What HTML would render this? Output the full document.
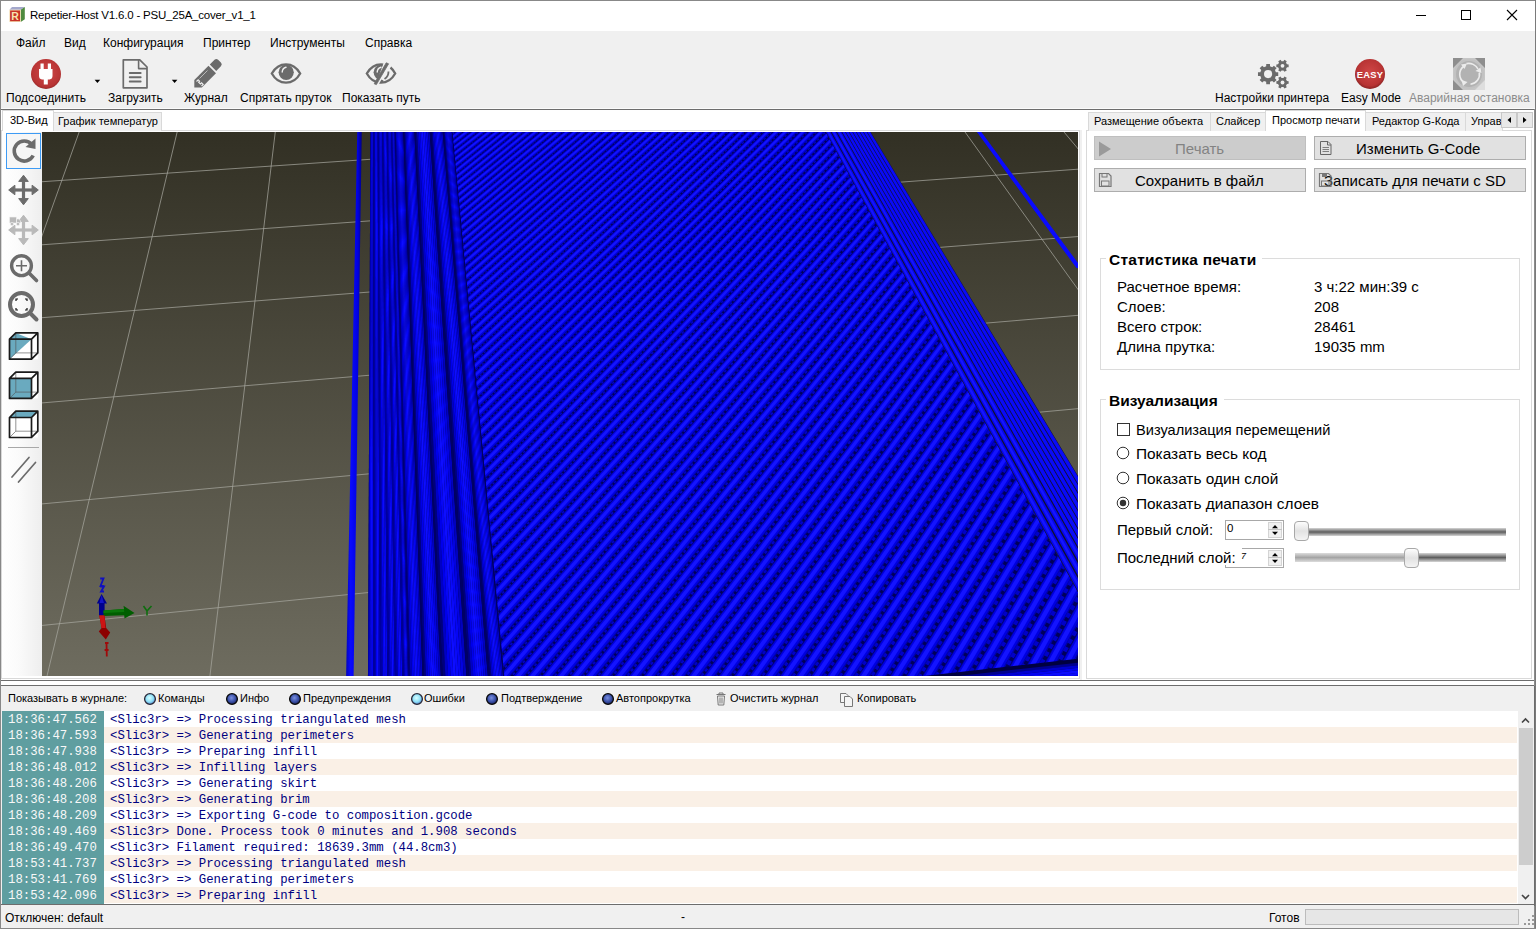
<!DOCTYPE html><html><head><meta charset="utf-8"><style>
html,body{margin:0;padding:0;}
body{width:1536px;height:929px;overflow:hidden;position:relative;background:#f0f0f0;font-family:"Liberation Sans", sans-serif;}
.t{position:absolute;white-space:pre;}
svg{position:absolute;left:0;top:0;}
</style></head><body>
<div style="position:absolute;left:0px;top:0px;width:1536px;height:31px;background:#fff"></div>
<div class="t" style="left:30px;top:10.27px;font-size:11.5px;line-height:11.5px;color:#000;font-weight:normal;font-family:'Liberation Sans', sans-serif;letter-spacing:-0.2px">Repetier-Host V1.6.0 - PSU_25A_cover_v1_1</div>
<svg style="left:0;top:0" width="30" height="30" viewBox="0 0 30 30">
<path d="M9.4 9.8 L12 7.1 H24.8 L20.7 9.8 Z" fill="#a4a8cc"/>
<path d="M20.7 9.8 L24.8 7.1 V19.2 L20.7 21.9 Z" fill="#4e8a3e"/>
<rect x="9.4" y="9.8" width="11.3" height="12.1" fill="#f2d8a8"/>
<rect x="10.1" y="10.5" width="9.9" height="10.7" fill="#c83228"/>
<text x="11.3" y="19.9" font-family="Liberation Sans" font-weight="bold" font-size="10.5" fill="#f8e4b0">R</text>
</svg>
<div style="position:absolute;left:1416px;top:15px;width:10px;height:1px;background:#000"></div>
<div style="position:absolute;left:1461px;top:10px;width:10px;height:10px;border:1px solid #000;box-sizing:border-box"></div>
<svg style="left:1506px;top:9px" width="12" height="12"><path d="M1 1 L11 11 M11 1 L1 11" stroke="#000" stroke-width="1.1"/></svg>
<div class="t" style="left:16px;top:36.84px;font-size:12px;line-height:12px;color:#000;font-weight:normal;font-family:'Liberation Sans', sans-serif;">Файл</div>
<div class="t" style="left:64px;top:36.84px;font-size:12px;line-height:12px;color:#000;font-weight:normal;font-family:'Liberation Sans', sans-serif;">Вид</div>
<div class="t" style="left:103px;top:36.84px;font-size:12px;line-height:12px;color:#000;font-weight:normal;font-family:'Liberation Sans', sans-serif;">Конфигурация</div>
<div class="t" style="left:203px;top:36.84px;font-size:12px;line-height:12px;color:#000;font-weight:normal;font-family:'Liberation Sans', sans-serif;">Принтер</div>
<div class="t" style="left:270px;top:36.84px;font-size:12px;line-height:12px;color:#000;font-weight:normal;font-family:'Liberation Sans', sans-serif;">Инструменты</div>
<div class="t" style="left:365px;top:36.84px;font-size:12px;line-height:12px;color:#000;font-weight:normal;font-family:'Liberation Sans', sans-serif;">Справка</div>
<div class="t" style="left:6px;top:91.84px;font-size:12px;line-height:12px;color:#000;font-weight:normal;font-family:'Liberation Sans', sans-serif;">Подсоединить</div>
<div class="t" style="left:108px;top:91.84px;font-size:12px;line-height:12px;color:#000;font-weight:normal;font-family:'Liberation Sans', sans-serif;">Загрузить</div>
<div class="t" style="left:184px;top:91.84px;font-size:12px;line-height:12px;color:#000;font-weight:normal;font-family:'Liberation Sans', sans-serif;">Журнал</div>
<div class="t" style="left:240px;top:91.84px;font-size:12px;line-height:12px;color:#000;font-weight:normal;font-family:'Liberation Sans', sans-serif;">Спрятать пруток</div>
<div class="t" style="left:342px;top:91.84px;font-size:12px;line-height:12px;color:#000;font-weight:normal;font-family:'Liberation Sans', sans-serif;">Показать путь</div>
<div class="t" style="left:1215px;top:91.84px;font-size:12px;line-height:12px;color:#000;font-weight:normal;font-family:'Liberation Sans', sans-serif;">Настройки принтера</div>
<div class="t" style="left:1341px;top:91.84px;font-size:12px;line-height:12px;color:#000;font-weight:normal;font-family:'Liberation Sans', sans-serif;">Easy Mode</div>
<div class="t" style="left:1409px;top:91.84px;font-size:12px;line-height:12px;color:#8c8c8c;font-weight:normal;font-family:'Liberation Sans', sans-serif;">Аварийная остановка</div>
<div style="position:absolute;left:0px;top:108px;width:1536px;height:1px;background:#fbfbfb"></div>
<div style="position:absolute;left:0px;top:109px;width:1536px;height:1px;background:#6d6d6d"></div>
<svg style="left:0;top:52px" width="440" height="44" viewBox="0 52 440 44">
<defs><radialGradient id="rg1" cx="0.5" cy="0.45" r="0.55"><stop offset="0" stop-color="#d04848"/><stop offset="0.85" stop-color="#b83434"/><stop offset="1" stop-color="#9a2a2a"/></radialGradient></defs>
<circle cx="46" cy="74" r="15" fill="url(#rg1)"/>
<rect x="40.5" y="63.5" width="3.2" height="6" fill="#fff"/><rect x="47.8" y="63.5" width="3.2" height="6" fill="#fff"/>
<path d="M39 69 H52.5 V76 Q52.5 79 49.5 79.5 H47.8 V84.5 H43.8 V79.5 H42 Q39 79 39 76 Z" fill="#fff"/>
<path d="M94.6 79.8 H100.2 L97.4 83 Z" fill="#000"/>
<path d="M171.8 79.8 H177.4 L174.6 83 Z" fill="#000"/>
<path d="M123.3 59.8 H139.8 L147 67 V87.8 H123.3 Z" fill="none" stroke="#6b6b6b" stroke-width="1.7" stroke-linejoin="round"/>
<path d="M138.6 60 V68.6 H147" fill="none" stroke="#6b6b6b" stroke-width="1.6" stroke-linejoin="round"/>
<rect x="128.8" y="72" width="12.8" height="1.9" rx="0.9" fill="#6b6b6b"/><rect x="128.8" y="76.3" width="12.8" height="1.9" rx="0.9" fill="#6b6b6b"/><rect x="128.8" y="80.5" width="12.8" height="1.9" rx="0.9" fill="#6b6b6b"/>
<path d="M194.3 87.5 L194.3 80 L208.5 65.8 L216 73.3 L201.8 87.5 Z" fill="#6b6b6b"/>
<path d="M209.8 64.5 L214.5 59.8 Q216.3 58 218.1 59.8 L220.9 62.6 Q222.7 64.4 220.9 66.2 L216.2 70.9 Z" fill="#6b6b6b"/>
<path d="M199.5 78.5 L207.5 70.5" stroke="#dcdcdc" stroke-width="0.7"/>
<path d="M196.5 81.5 L198.2 79.8 L199.6 81.2 L198.6 82.2 L200.4 84 L201.6 82.8 L203.2 84.4 L201.5 86" fill="none" stroke="#f0f0f0" stroke-width="1.1"/>
<path d="M271.8 73.5 C275 67.8 280 64.3 286 64.3 C292 64.3 297 67.8 300.2 73.5 C297 79.2 292 82.7 286 82.7 C280 82.7 275 79.2 271.8 73.5 Z" fill="none" stroke="#6b6b6b" stroke-width="2.3"/>
<circle cx="286.2" cy="72.3" r="7.6" fill="#6b6b6b"/>
<path d="M282.2 72 Q282.5 68.2 286 67.3" stroke="#f0f0f0" stroke-width="1.4" fill="none" stroke-linecap="round"/>
<defs><clipPath id="eyeL"><path d="M360 56 H386 L374 90 H360 Z"/></clipPath></defs>
<g clip-path="url(#eyeL)">
<path d="M366.8 73.5 C370 67.8 375 64.3 381 64.3 C387 64.3 392 67.8 395.2 73.5 C392 79.2 387 82.7 381 82.7 C375 82.7 370 79.2 366.8 73.5 Z" fill="none" stroke="#6b6b6b" stroke-width="2.3"/>
<circle cx="381.2" cy="72.3" r="7.6" fill="#6b6b6b"/>
<path d="M377.2 72 Q377.5 68.2 381 67.3" stroke="#f0f0f0" stroke-width="1.4" fill="none" stroke-linecap="round"/>
</g>
<path d="M386.2 62.8 L388.6 63.8 L376.4 84.6 L374.2 83.8 Z" fill="#6b6b6b" stroke="#6b6b6b" stroke-width="0.8" stroke-linejoin="round"/>
<path d="M390.5 67.5 C392.5 69.2 394 71.2 395.2 73.5 C392 79.2 387 82.7 381 82.7 L382.5 80" fill="none" stroke="#6b6b6b" stroke-width="2.3"/>
<path d="M388.5 71.5 C388.5 75 387 77.5 384.5 79" fill="none" stroke="#6b6b6b" stroke-width="1.8"/>
</svg>
<svg style="left:1240px;top:52px" width="296" height="44" viewBox="1240 52 296 44">
<polygon points="1275.86,72.17 1278.23,72.25 1278.23,75.95 1275.86,76.03 1274.95,78.23 1276.57,79.96 1273.96,82.57 1272.23,80.95 1270.03,81.86 1269.95,84.23 1266.25,84.23 1266.17,81.86 1263.97,80.95 1262.24,82.57 1259.63,79.96 1261.25,78.23 1260.34,76.03 1257.97,75.95 1257.97,72.25 1260.34,72.17 1261.25,69.97 1259.63,68.24 1262.24,65.63 1263.97,67.25 1266.17,66.34 1266.25,63.97 1269.95,63.97 1270.03,66.34 1272.23,67.25 1273.96,65.63 1276.57,68.24 1274.95,69.97" fill="#6b6b6b"/><circle cx="1268.1" cy="74.1" r="4.1" fill="#f0f0f0"/>
<polygon points="1286.97,64.35 1288.65,64.43 1288.65,67.17 1286.97,67.25 1285.99,68.94 1286.76,70.44 1284.38,71.81 1283.48,70.40 1281.52,70.40 1280.62,71.81 1278.24,70.44 1279.01,68.94 1278.03,67.25 1276.35,67.17 1276.35,64.43 1278.03,64.35 1279.01,62.66 1278.24,61.16 1280.62,59.79 1281.52,61.20 1283.48,61.20 1284.38,59.79 1286.76,61.16 1285.99,62.66" fill="#6b6b6b"/><circle cx="1282.5" cy="65.8" r="1.9" fill="#f0f0f0"/>
<polygon points="1286.97,81.05 1288.65,81.13 1288.65,83.87 1286.97,83.95 1285.99,85.64 1286.76,87.14 1284.38,88.51 1283.48,87.10 1281.52,87.10 1280.62,88.51 1278.24,87.14 1279.01,85.64 1278.03,83.95 1276.35,83.87 1276.35,81.13 1278.03,81.05 1279.01,79.36 1278.24,77.86 1280.62,76.49 1281.52,77.90 1283.48,77.90 1284.38,76.49 1286.76,77.86 1285.99,79.36" fill="#6b6b6b"/><circle cx="1282.5" cy="82.5" r="1.9" fill="#f0f0f0"/>
<defs><radialGradient id="rg2" cx="0.5" cy="0.45" r="0.55"><stop offset="0" stop-color="#d04646"/><stop offset="0.8" stop-color="#b83434"/><stop offset="1" stop-color="#8a2424"/></radialGradient></defs>
<circle cx="1370" cy="74" r="15" fill="url(#rg2)"/>
<text x="1370" y="77.8" text-anchor="middle" font-family="Liberation Sans" font-weight="bold" font-size="9.4" letter-spacing="0.2" fill="#fff">EASY</text>
<rect x="1453" y="58" width="32" height="32" fill="#c6c6c6"/>
<path d="M1453 58 H1463 L1453 68 Z M1475 58 H1485 V68 Z M1453 80 V90 H1463 Z" fill="#8e8e8e"/>
<path d="M1485 80 V90 H1475 Z" fill="#dedede"/>
<circle cx="1469" cy="74" r="15" fill="#c2c2c2"/>
<circle cx="1469" cy="74" r="13" fill="#b2b2b2"/>
<path d="M1463.5 66.5 A10 10 0 0 0 1464 82.5" stroke="#ececec" stroke-width="1.6" fill="none"/>
<path d="M1466.5 63.6 A10.5 10.5 0 0 1 1478 69" stroke="#ececec" stroke-width="1.6" fill="none"/>
<path d="M1479.3 72.5 A10 10 0 0 1 1470.5 84.3" stroke="#ececec" stroke-width="1.6" fill="none"/>
<path d="M1461 64.5 L1467 63.5 L1464.5 69 Z" fill="#ececec"/>
<path d="M1475.5 71 L1480.5 67.5 L1481.5 73 Z" fill="#ececec"/>
<path d="M1461.5 80 L1467.5 82 L1463 86 Z" fill="#ececec"/>
</svg>
<div style="position:absolute;left:1px;top:110px;width:1535px;height:570px;background:#ffffff"></div>
<div style="position:absolute;left:1080px;top:130px;width:2px;height:550px;background:#f0f0f0"></div>
<div style="position:absolute;left:1px;top:130px;width:1079px;height:549px;background:#fff;border:1px solid #d9d9d9;box-sizing:border-box"></div>
<div style="position:absolute;left:53px;top:112px;width:109px;height:19px;background:#f0f0f0;border:1px solid #d9d9d9;border-bottom:none;box-sizing:border-box"></div>
<div class="t" style="left:58px;top:116.19px;font-size:11px;line-height:11px;color:#000;font-weight:normal;font-family:'Liberation Sans', sans-serif;">График температур</div>
<div style="position:absolute;left:2px;top:110px;width:52px;height:21px;background:#fff;border:1px solid #d9d9d9;border-bottom:none;box-sizing:border-box"></div>
<div class="t" style="left:10px;top:114.69px;font-size:11px;line-height:11px;color:#000;font-weight:normal;font-family:'Liberation Sans', sans-serif;">3D-Вид</div>
<div style="position:absolute;left:2px;top:132px;width:40px;height:544px;background:linear-gradient(to right,#ffffff 0%,#fbfbfb 40%,#eeeeee 100%)"></div>
<svg style="left:42px;top:132px" width="1036" height="544" viewBox="42 132 1036 544"><defs>
<linearGradient id="bg3d" x1="0" y1="0" x2="0" y2="1"><stop offset="0" stop-color="#323024"/><stop offset="1" stop-color="#6e6c5f"/></linearGradient>
<linearGradient id="cyl" x1="0" y1="0" x2="1" y2="0"><stop offset="0" stop-color="#000048"/><stop offset="0.18" stop-color="#0000b8"/><stop offset="0.45" stop-color="#0a0aff"/><stop offset="0.7" stop-color="#0000d8"/><stop offset="1" stop-color="#00003a"/></linearGradient>
<linearGradient id="cylh" x1="0" y1="0" x2="0" y2="1"><stop offset="0" stop-color="#000070"/><stop offset="0.4" stop-color="#0a0aff"/><stop offset="1" stop-color="#000050"/></linearGradient>
<linearGradient id="cyl2" x1="0" y1="0" x2="1" y2="0"><stop offset="0" stop-color="#0000a0"/><stop offset="0.35" stop-color="#0a0aff"/><stop offset="0.75" stop-color="#0000e0"/><stop offset="1" stop-color="#000070"/></linearGradient>
</defs><rect x="42" y="132" width="1036" height="544" fill="url(#bg3d)"/><line x1="-62.28" y1="41.04" x2="-1058.60" y2="1712.94" stroke="#a8a8a0" stroke-width="1" stroke-opacity="0.72"/><line x1="27.15" y1="35.89" x2="-748.37" y2="1661.16" stroke="#a8a8a0" stroke-width="1" stroke-opacity="0.72"/><line x1="115.43" y1="30.80" x2="-450.89" y2="1611.50" stroke="#a8a8a0" stroke-width="1" stroke-opacity="0.72"/><line x1="202.58" y1="25.77" x2="-165.41" y2="1563.85" stroke="#a8a8a0" stroke-width="1" stroke-opacity="0.72"/><line x1="288.62" y1="20.81" x2="108.80" y2="1518.09" stroke="#a8a8a0" stroke-width="1" stroke-opacity="0.72"/><line x1="373.57" y1="15.92" x2="372.38" y2="1474.09" stroke="#a8a8a0" stroke-width="1" stroke-opacity="0.72"/><line x1="457.45" y1="11.08" x2="625.95" y2="1431.77" stroke="#a8a8a0" stroke-width="1" stroke-opacity="0.72"/><line x1="540.29" y1="6.31" x2="870.06" y2="1391.02" stroke="#a8a8a0" stroke-width="1" stroke-opacity="0.72"/><line x1="622.09" y1="1.59" x2="1105.23" y2="1351.77" stroke="#a8a8a0" stroke-width="1" stroke-opacity="0.72"/><line x1="702.89" y1="-3.07" x2="1331.95" y2="1313.93" stroke="#a8a8a0" stroke-width="1" stroke-opacity="0.72"/><line x1="782.69" y1="-7.67" x2="1550.66" y2="1277.42" stroke="#a8a8a0" stroke-width="1" stroke-opacity="0.72"/><line x1="861.52" y1="-12.21" x2="1761.78" y2="1242.18" stroke="#a8a8a0" stroke-width="1" stroke-opacity="0.72"/><line x1="939.40" y1="-16.70" x2="1965.69" y2="1208.15" stroke="#a8a8a0" stroke-width="1" stroke-opacity="0.72"/><line x1="1016.34" y1="-21.14" x2="2162.77" y2="1175.25" stroke="#a8a8a0" stroke-width="1" stroke-opacity="0.72"/><line x1="1092.36" y1="-25.52" x2="2353.35" y2="1143.44" stroke="#a8a8a0" stroke-width="1" stroke-opacity="0.72"/><line x1="1167.47" y1="-29.85" x2="2537.74" y2="1112.67" stroke="#a8a8a0" stroke-width="1" stroke-opacity="0.72"/><line x1="-283.30" y1="97.90" x2="1289.73" y2="2.26" stroke="#a8a8a0" stroke-width="1" stroke-opacity="0.72"/><line x1="-327.04" y1="150.40" x2="1343.40" y2="42.92" stroke="#a8a8a0" stroke-width="1" stroke-opacity="0.72"/><line x1="-377.01" y1="210.39" x2="1403.75" y2="88.63" stroke="#a8a8a0" stroke-width="1" stroke-opacity="0.72"/><line x1="-434.66" y1="279.59" x2="1472.12" y2="140.42" stroke="#a8a8a0" stroke-width="1" stroke-opacity="0.72"/><line x1="-501.88" y1="360.29" x2="1550.21" y2="199.58" stroke="#a8a8a0" stroke-width="1" stroke-opacity="0.72"/><line x1="-581.30" y1="455.62" x2="1640.26" y2="267.79" stroke="#a8a8a0" stroke-width="1" stroke-opacity="0.72"/><line x1="-676.55" y1="569.96" x2="1745.24" y2="347.32" stroke="#a8a8a0" stroke-width="1" stroke-opacity="0.72"/><line x1="-792.89" y1="709.62" x2="1869.21" y2="441.23" stroke="#a8a8a0" stroke-width="1" stroke-opacity="0.72"/><line x1="-938.21" y1="884.06" x2="2017.82" y2="553.80" stroke="#a8a8a0" stroke-width="1" stroke-opacity="0.72"/><line x1="-1124.86" y1="1108.12" x2="2199.24" y2="691.23" stroke="#a8a8a0" stroke-width="1" stroke-opacity="0.72"/><line x1="-1373.41" y1="1406.49" x2="2425.67" y2="862.76" stroke="#a8a8a0" stroke-width="1" stroke-opacity="0.72"/><polygon points="358.29,81.87 362.54,81.61 352.15,773.10 344.10,774.02" fill="url(#cyl2)"/><polygon points="370.66,81.10 447.30,76.31 511.97,754.84 367.54,771.34" fill="#00002e"/><polygon points="370.66,81.10 371.41,81.05 368.96,771.18 367.54,771.34" fill="rgb(0,0,178)"/><polygon points="371.36,81.05 372.11,81.01 370.28,771.03 368.87,771.19" fill="rgb(3,3,240)"/><polygon points="372.06,81.01 372.81,80.96 371.61,770.88 370.20,771.04" fill="rgb(12,12,252)"/><polygon points="372.76,80.97 373.51,80.92 372.94,770.72 371.52,770.88" fill="rgb(4,4,240)"/><polygon points="373.46,80.92 374.21,80.88 374.26,770.57 372.85,770.73" fill="rgb(0,0,157)"/><polygon points="374.16,80.88 375.00,80.83 375.76,770.40 374.17,770.58" fill="rgb(0,0,178)"/><polygon points="374.95,80.83 375.79,80.78 377.26,770.23 375.68,770.41" fill="rgb(3,3,240)"/><polygon points="375.75,80.78 376.59,80.73 378.76,770.06 377.18,770.24" fill="rgb(12,12,252)"/><polygon points="376.54,80.73 377.38,80.68 380.26,769.89 378.67,770.07" fill="rgb(4,4,240)"/><polygon points="377.33,80.68 378.17,80.63 381.76,769.72 380.17,769.90" fill="rgb(0,0,157)"/><polygon points="378.12,80.63 379.04,80.57 383.40,769.53 381.67,769.73" fill="rgb(0,0,178)"/><polygon points="378.99,80.58 379.90,80.52 385.04,769.34 383.31,769.54" fill="rgb(3,3,240)"/><polygon points="379.86,80.52 380.77,80.47 386.67,769.15 384.95,769.35" fill="rgb(12,12,252)"/><polygon points="380.72,80.47 381.63,80.41 388.31,768.97 386.59,769.16" fill="rgb(4,4,240)"/><polygon points="381.59,80.41 382.50,80.36 389.95,768.78 388.22,768.98" fill="rgb(0,0,157)"/><polygon points="382.45,80.36 383.33,80.31 391.51,768.60 389.86,768.79" fill="rgb(0,0,178)"/><polygon points="383.28,80.31 384.15,80.25 393.08,768.42 391.43,768.61" fill="rgb(3,3,240)"/><polygon points="384.11,80.26 384.98,80.20 394.64,768.24 392.99,768.43" fill="rgb(12,12,252)"/><polygon points="384.94,80.20 385.81,80.15 396.21,768.07 394.56,768.25" fill="rgb(4,4,240)"/><polygon points="385.76,80.15 386.64,80.10 397.78,767.89 396.12,768.08" fill="rgb(0,0,157)"/><polygon points="386.59,80.10 387.48,80.05 399.37,767.70 397.69,767.90" fill="rgb(0,0,178)"/><polygon points="387.44,80.05 388.33,79.99 400.97,767.52 399.29,767.71" fill="rgb(3,3,240)"/><polygon points="388.28,80.00 389.18,79.94 402.57,767.34 400.89,767.53" fill="rgb(12,12,252)"/><polygon points="389.13,79.94 390.02,79.89 404.17,767.16 402.49,767.35" fill="rgb(4,4,240)"/><polygon points="389.98,79.89 390.87,79.83 405.77,766.97 404.08,767.17" fill="rgb(0,0,157)"/><polygon points="390.82,79.84 391.44,79.80 406.84,766.85 405.68,766.98" fill="rgb(0,0,178)"/><polygon points="391.39,79.80 392.01,79.76 407.92,766.73 406.76,766.86" fill="rgb(3,3,240)"/><polygon points="391.96,79.77 392.58,79.73 409.00,766.61 407.83,766.74" fill="rgb(12,12,252)"/><polygon points="392.53,79.73 393.15,79.69 410.07,766.48 408.91,766.61" fill="rgb(4,4,240)"/><polygon points="393.10,79.69 393.72,79.66 411.15,766.36 409.99,766.49" fill="rgb(0,0,157)"/><polygon points="393.67,79.66 394.57,79.60 412.76,766.18 411.06,766.37" fill="rgb(0,0,125)"/><polygon points="394.53,79.61 395.43,79.55 414.38,765.99 412.68,766.18" fill="rgb(0,0,197)"/><polygon points="395.38,79.55 396.28,79.50 415.99,765.81 414.29,766.00" fill="rgb(0,0,235)"/><polygon points="396.24,79.50 397.14,79.44 417.60,765.62 415.90,765.82" fill="rgb(7,7,245)"/><polygon points="397.09,79.45 397.99,79.39 419.21,765.44 417.51,765.63" fill="rgb(14,14,255)"/><polygon points="397.94,79.39 398.84,79.34 420.82,765.25 419.13,765.45" fill="rgb(10,10,249)"/><polygon points="398.80,79.34 399.70,79.28 422.44,765.07 420.74,765.26" fill="rgb(6,6,243)"/><polygon points="399.65,79.28 400.55,79.23 424.05,764.89 422.35,765.08" fill="rgb(3,3,223)"/><polygon points="400.51,79.23 401.40,79.18 425.66,764.70 423.96,764.90" fill="rgb(1,1,190)"/><polygon points="401.36,79.18 402.26,79.12 427.27,764.52 425.57,764.71" fill="rgb(0,0,101)"/><polygon points="402.21,79.12 403.31,79.06 429.26,764.29 427.18,764.53" fill="rgb(0,0,125)"/><polygon points="403.27,79.06 404.37,78.99 431.25,764.06 429.17,764.30" fill="rgb(0,0,197)"/><polygon points="404.32,78.99 405.42,78.92 433.24,763.84 431.16,764.07" fill="rgb(0,0,235)"/><polygon points="405.38,78.93 406.48,78.86 435.22,763.61 433.15,763.85" fill="rgb(7,7,245)"/><polygon points="406.43,78.86 407.53,78.79 437.21,763.38 435.14,763.62" fill="rgb(14,14,255)"/><polygon points="407.49,78.80 408.59,78.73 439.20,763.16 437.13,763.39" fill="rgb(10,10,249)"/><polygon points="408.54,78.73 409.64,78.66 441.19,762.93 439.11,763.17" fill="rgb(6,6,243)"/><polygon points="409.60,78.66 410.70,78.59 443.17,762.70 441.10,762.94" fill="rgb(3,3,223)"/><polygon points="410.65,78.60 411.75,78.53 445.16,762.48 443.09,762.71" fill="rgb(1,1,190)"/><polygon points="411.70,78.53 412.80,78.46 447.14,762.25 445.07,762.49" fill="rgb(0,0,101)"/><polygon points="412.76,78.47 414.28,78.37 449.92,761.93 447.06,762.26" fill="rgb(0,0,125)"/><polygon points="414.23,78.37 415.75,78.28 452.70,761.61 449.83,761.94" fill="rgb(0,0,197)"/><polygon points="415.71,78.28 417.23,78.19 455.47,761.30 452.61,761.62" fill="rgb(0,0,235)"/><polygon points="417.18,78.19 418.70,78.09 458.25,760.98 455.39,761.31" fill="rgb(7,7,245)"/><polygon points="418.66,78.10 420.18,78.00 461.02,760.66 458.16,760.99" fill="rgb(14,14,255)"/><polygon points="420.13,78.00 421.65,77.91 463.79,760.35 460.93,760.67" fill="rgb(10,10,249)"/><polygon points="421.60,77.91 423.12,77.82 466.56,760.03 463.71,760.36" fill="rgb(6,6,243)"/><polygon points="423.08,77.82 424.60,77.73 469.33,759.71 466.48,760.04" fill="rgb(3,3,223)"/><polygon points="424.55,77.73 426.07,77.63 472.10,759.40 469.25,759.72" fill="rgb(1,1,190)"/><polygon points="426.02,77.64 427.54,77.54 474.87,759.08 472.02,759.41" fill="rgb(0,0,101)"/><polygon points="427.49,77.54 428.71,77.47 477.07,758.83 474.78,759.09" fill="rgb(0,0,125)"/><polygon points="428.66,77.47 429.88,77.40 479.27,758.58 476.98,758.84" fill="rgb(0,0,197)"/><polygon points="429.83,77.40 431.05,77.32 481.47,758.33 479.18,758.59" fill="rgb(0,0,235)"/><polygon points="431.00,77.32 432.22,77.25 483.66,758.08 481.38,758.34" fill="rgb(7,7,245)"/><polygon points="432.17,77.25 433.39,77.18 485.86,757.83 483.58,758.09" fill="rgb(14,14,255)"/><polygon points="433.34,77.18 434.56,77.10 488.05,757.58 485.77,757.84" fill="rgb(10,10,249)"/><polygon points="434.51,77.11 435.73,77.03 490.25,757.33 487.97,757.59" fill="rgb(6,6,243)"/><polygon points="435.68,77.03 436.90,76.96 492.44,757.07 490.16,757.34" fill="rgb(3,3,223)"/><polygon points="436.85,76.96 438.06,76.88 494.64,756.82 492.36,757.08" fill="rgb(1,1,190)"/><polygon points="438.02,76.89 439.23,76.81 496.83,756.57 494.55,756.83" fill="rgb(0,0,101)"/><polygon points="439.19,76.81 440.04,76.76 498.35,756.40 496.74,756.58" fill="rgb(0,0,125)"/><polygon points="440.00,76.76 440.86,76.71 499.88,756.23 498.27,756.41" fill="rgb(0,0,197)"/><polygon points="440.81,76.71 441.67,76.66 501.40,756.05 499.79,756.24" fill="rgb(0,0,235)"/><polygon points="441.62,76.66 442.48,76.61 502.93,755.88 501.32,756.06" fill="rgb(7,7,245)"/><polygon points="442.44,76.61 443.29,76.56 504.45,755.70 502.84,755.89" fill="rgb(14,14,255)"/><polygon points="443.25,76.56 444.10,76.51 505.97,755.53 504.36,755.71" fill="rgb(10,10,249)"/><polygon points="444.06,76.51 444.92,76.46 507.49,755.36 505.88,755.54" fill="rgb(6,6,243)"/><polygon points="444.87,76.46 445.73,76.40 509.01,755.18 507.41,755.37" fill="rgb(3,3,223)"/><polygon points="445.68,76.41 446.54,76.35 510.54,755.01 508.93,755.19" fill="rgb(1,1,190)"/><polygon points="446.49,76.36 447.35,76.30 512.06,754.83 510.45,755.02" fill="rgb(0,0,101)"/><clipPath id="cpMain"><polygon points="447.30,76.31 783.58,55.28 1114.03,657.84 509.18,725.57"/></clipPath><polygon points="447.30,76.31 783.58,55.28 1114.03,657.84 509.18,725.57" fill="#00005a"/><g clip-path="url(#cpMain)"><polygon points="419.71,74.79 702.59,-129.30 703.77,-127.28 419.93,78.54" fill="#0000a8"/><polygon points="419.73,75.07 702.67,-129.15 703.62,-127.53 419.90,78.07" fill="#0000e0"/><polygon points="419.76,75.63 702.85,-128.85 703.35,-127.99 419.85,77.22" fill="#1414ff"/><line x1="420.0" y1="79.0" x2="703.9" y2="-127.0" stroke="#0000c8" stroke-width="0.80" stroke-dasharray="1.50 1.23"/><polygon points="419.99,79.44 704.22,-126.50 705.41,-124.46 420.21,83.23" fill="#0000a8"/><polygon points="420.00,79.73 704.31,-126.35 705.26,-124.72 420.18,82.76" fill="#0000e0"/><polygon points="420.04,80.29 704.49,-126.05 704.99,-125.18 420.13,81.90" fill="#1414ff"/><line x1="420.2" y1="83.7" x2="705.6" y2="-124.2" stroke="#0000c8" stroke-width="0.80" stroke-dasharray="1.51 1.24"/><polygon points="420.27,84.15 705.87,-123.68 707.07,-121.62 420.49,87.99" fill="#0000a8"/><polygon points="420.28,84.44 705.96,-123.52 706.92,-121.88 420.47,87.50" fill="#0000e0"/><polygon points="420.32,85.01 706.14,-123.22 706.65,-122.34 420.41,86.64" fill="#1414ff"/><line x1="420.5" y1="88.5" x2="707.2" y2="-121.4" stroke="#0000c8" stroke-width="0.80" stroke-dasharray="1.52 1.24"/><polygon points="420.55,88.91 707.54,-120.82 708.75,-118.75 420.78,92.80" fill="#0000a8"/><polygon points="420.57,89.20 707.63,-120.67 708.60,-119.01 420.75,92.31" fill="#0000e0"/><polygon points="420.60,89.78 707.81,-120.36 708.33,-119.47 420.70,91.43" fill="#1414ff"/><line x1="420.8" y1="93.3" x2="708.9" y2="-118.5" stroke="#0000c8" stroke-width="0.80" stroke-dasharray="1.53 1.25"/><polygon points="420.84,93.74 709.22,-117.94 710.45,-115.84 421.07,97.67" fill="#0000a8"/><polygon points="420.85,94.03 709.31,-117.79 710.30,-116.11 421.04,97.18" fill="#0000e0"/><polygon points="420.89,94.62 709.50,-117.47 710.02,-116.58 420.99,96.29" fill="#1414ff"/><line x1="421.1" y1="98.2" x2="710.6" y2="-115.6" stroke="#0000c8" stroke-width="0.80" stroke-dasharray="1.54 1.26"/><polygon points="421.13,98.62 710.92,-115.03 712.16,-112.91 421.36,102.60" fill="#0000a8"/><polygon points="421.14,98.92 711.02,-114.87 712.01,-113.18 421.33,102.10" fill="#0000e0"/><polygon points="421.18,99.51 711.20,-114.55 711.73,-113.65 421.28,101.20" fill="#1414ff"/><line x1="421.4" y1="103.1" x2="712.3" y2="-112.6" stroke="#0000c8" stroke-width="0.80" stroke-dasharray="1.55 1.27"/><polygon points="421.42,103.56 712.64,-112.09 713.90,-109.95 421.66,107.60" fill="#0000a8"/><polygon points="421.44,103.87 712.74,-111.93 713.74,-110.22 421.63,107.09" fill="#0000e0"/><polygon points="421.47,104.47 712.92,-111.61 713.46,-110.70 421.58,106.18" fill="#1414ff"/><line x1="421.7" y1="108.1" x2="714.1" y2="-109.7" stroke="#0000c8" stroke-width="0.80" stroke-dasharray="1.56 1.27"/><polygon points="421.72,108.57 714.38,-109.12 715.65,-106.95 421.96,112.65" fill="#0000a8"/><polygon points="421.74,108.88 714.47,-108.96 715.49,-107.22 421.93,112.14" fill="#0000e0"/><polygon points="421.77,109.49 714.66,-108.63 715.20,-107.71 421.88,111.22" fill="#1414ff"/><line x1="422.0" y1="113.2" x2="715.8" y2="-106.7" stroke="#0000c8" stroke-width="0.80" stroke-dasharray="1.57 1.28"/><polygon points="422.02,113.64 716.13,-106.12 717.41,-103.93 422.27,117.78" fill="#0000a8"/><polygon points="422.04,113.95 716.23,-105.95 717.25,-104.20 422.24,117.26" fill="#0000e0"/><polygon points="422.08,114.57 716.42,-105.63 716.96,-104.70 422.18,116.32" fill="#1414ff"/><line x1="422.3" y1="118.3" x2="717.6" y2="-103.7" stroke="#0000c8" stroke-width="0.80" stroke-dasharray="1.58 1.29"/><polygon points="422.33,118.78 717.91,-103.08 719.20,-100.87 422.57,122.96" fill="#0000a8"/><polygon points="422.34,119.09 718.00,-102.92 719.04,-101.15 422.54,122.44" fill="#0000e0"/><polygon points="422.38,119.71 718.20,-102.59 718.75,-101.65 422.49,121.49" fill="#1414ff"/><line x1="422.6" y1="123.5" x2="719.4" y2="-100.6" stroke="#0000c8" stroke-width="0.80" stroke-dasharray="1.59 1.30"/><polygon points="422.63,123.98 719.70,-100.02 721.00,-97.79 422.89,128.22" fill="#0000a8"/><polygon points="422.65,124.29 719.80,-99.85 720.84,-98.07 422.86,127.69" fill="#0000e0"/><polygon points="422.69,124.93 719.99,-99.52 720.54,-98.57 422.80,126.73" fill="#1414ff"/><line x1="422.9" y1="128.8" x2="721.2" y2="-97.5" stroke="#0000c8" stroke-width="0.80" stroke-dasharray="1.60 1.31"/><polygon points="422.95,129.24 721.51,-96.92 722.83,-94.67 423.20,133.54" fill="#0000a8"/><polygon points="422.97,129.56 721.61,-96.75 722.66,-94.95 423.17,133.00" fill="#0000e0"/><polygon points="423.01,130.21 721.80,-96.42 722.36,-95.46 423.11,132.03" fill="#1414ff"/><line x1="423.2" y1="134.1" x2="723.0" y2="-94.4" stroke="#0000c8" stroke-width="0.80" stroke-dasharray="1.61 1.32"/><polygon points="423.27,134.58 723.34,-93.79 724.67,-91.51 423.52,138.93" fill="#0000a8"/><polygon points="423.28,134.90 723.44,-93.62 724.50,-91.80 423.49,138.39" fill="#0000e0"/><polygon points="423.32,135.56 723.64,-93.28 724.20,-92.31 423.43,137.40" fill="#1414ff"/><line x1="423.6" y1="139.5" x2="724.8" y2="-91.2" stroke="#0000c8" stroke-width="0.80" stroke-dasharray="1.62 1.32"/><polygon points="423.59,139.99 725.18,-90.63 726.53,-88.33 423.85,144.40" fill="#0000a8"/><polygon points="423.61,140.32 725.28,-90.46 726.36,-88.61 423.82,143.84" fill="#0000e0"/><polygon points="423.65,140.97 725.49,-90.11 726.06,-89.13 423.76,142.85" fill="#1414ff"/><line x1="423.9" y1="145.0" x2="726.7" y2="-88.0" stroke="#0000c8" stroke-width="0.80" stroke-dasharray="1.63 1.33"/><polygon points="423.91,145.46 727.05,-87.43 728.41,-85.10 424.18,149.93" fill="#0000a8"/><polygon points="423.93,145.80 727.15,-87.26 728.24,-85.40 424.15,149.37" fill="#0000e0"/><polygon points="423.97,146.47 727.36,-86.91 727.94,-85.92 424.09,148.36" fill="#1414ff"/><line x1="424.2" y1="150.5" x2="728.6" y2="-84.8" stroke="#0000c8" stroke-width="0.80" stroke-dasharray="1.64 1.34"/><polygon points="424.24,151.01 728.94,-84.20 730.32,-81.85 424.51,155.54" fill="#0000a8"/><polygon points="424.26,151.35 729.04,-84.03 730.14,-82.14 424.48,154.97" fill="#0000e0"/><polygon points="424.30,152.03 729.25,-83.68 729.83,-82.68 424.42,153.95" fill="#1414ff"/><line x1="424.5" y1="156.1" x2="730.5" y2="-81.6" stroke="#0000c8" stroke-width="0.80" stroke-dasharray="1.65 1.35"/><polygon points="424.58,156.64 730.85,-80.94 732.24,-78.56 424.85,161.23" fill="#0000a8"/><polygon points="424.60,156.98 730.95,-80.76 732.06,-78.86 424.82,160.65" fill="#0000e0"/><polygon points="424.64,157.67 731.16,-80.41 731.75,-79.39 424.75,159.62" fill="#1414ff"/><line x1="424.9" y1="161.8" x2="732.4" y2="-78.3" stroke="#0000c8" stroke-width="0.80" stroke-dasharray="1.66 1.36"/><polygon points="424.92,162.34 732.78,-77.64 734.18,-75.23 425.19,166.99" fill="#0000a8"/><polygon points="424.94,162.68 732.88,-77.46 734.01,-75.53 425.16,166.41" fill="#0000e0"/><polygon points="424.98,163.38 733.09,-77.10 733.69,-76.08 425.10,165.36" fill="#1414ff"/><line x1="425.2" y1="167.6" x2="734.4" y2="-74.9" stroke="#0000c8" stroke-width="0.80" stroke-dasharray="1.67 1.37"/><polygon points="425.26,168.11 734.73,-74.30 736.15,-71.87 425.54,172.83" fill="#0000a8"/><polygon points="425.28,168.47 734.83,-74.12 735.97,-72.17 425.51,172.24" fill="#0000e0"/><polygon points="425.32,169.17 735.05,-73.76 735.65,-72.72 425.44,171.17" fill="#1414ff"/><line x1="425.6" y1="173.4" x2="736.3" y2="-71.6" stroke="#0000c8" stroke-width="0.80" stroke-dasharray="1.69 1.38"/><polygon points="425.61,173.97 736.70,-70.93 738.13,-68.47 425.89,178.75" fill="#0000a8"/><polygon points="425.63,174.33 736.80,-70.75 737.95,-68.78 425.86,178.15" fill="#0000e0"/><polygon points="425.67,175.04 737.02,-70.38 737.63,-69.33 425.79,177.07" fill="#1414ff"/><line x1="425.9" y1="179.4" x2="738.3" y2="-68.2" stroke="#0000c8" stroke-width="0.80" stroke-dasharray="1.70 1.39"/><polygon points="425.96,179.91 738.69,-67.52 740.14,-65.03 426.25,184.75" fill="#0000a8"/><polygon points="425.98,180.27 738.80,-67.33 739.96,-65.35 426.21,184.14" fill="#0000e0"/><polygon points="426.03,180.99 739.02,-66.96 739.63,-65.91 426.15,183.05" fill="#1414ff"/><line x1="426.3" y1="185.4" x2="740.3" y2="-64.7" stroke="#0000c8" stroke-width="0.80" stroke-dasharray="1.71 1.40"/><polygon points="426.32,185.92 740.70,-64.07 742.17,-61.56 426.61,190.84" fill="#0000a8"/><polygon points="426.34,186.29 740.81,-63.88 741.99,-61.87 426.57,190.22" fill="#0000e0"/><polygon points="426.38,187.03 741.03,-63.51 741.66,-62.44 426.51,189.11" fill="#1414ff"/><line x1="426.6" y1="191.5" x2="742.4" y2="-61.2" stroke="#0000c8" stroke-width="0.81" stroke-dasharray="1.72 1.41"/><polygon points="426.68,192.03 742.74,-60.59 744.23,-58.04 426.98,197.01" fill="#0000a8"/><polygon points="426.70,192.40 742.85,-60.40 744.04,-58.36 426.94,196.38" fill="#0000e0"/><polygon points="426.75,193.14 743.07,-60.02 743.71,-58.94 426.87,195.26" fill="#1414ff"/><line x1="427.0" y1="197.6" x2="744.4" y2="-57.7" stroke="#0000c8" stroke-width="0.82" stroke-dasharray="1.73 1.42"/><polygon points="427.05,198.21 744.80,-57.06 746.30,-54.49 427.35,203.27" fill="#0000a8"/><polygon points="427.07,198.59 744.91,-56.87 746.12,-54.81 427.31,202.63" fill="#0000e0"/><polygon points="427.12,199.35 745.14,-56.49 745.78,-55.39 427.24,201.49" fill="#1414ff"/><line x1="427.4" y1="203.9" x2="746.5" y2="-54.2" stroke="#0000c8" stroke-width="0.83" stroke-dasharray="1.75 1.43"/><polygon points="427.42,204.49 746.88,-53.50 748.40,-50.90 427.73,209.61" fill="#0000a8"/><polygon points="427.45,204.87 747.00,-53.30 748.21,-51.22 427.69,208.97" fill="#0000e0"/><polygon points="427.49,205.64 747.23,-52.91 747.87,-51.81 427.62,207.81" fill="#1414ff"/><line x1="427.8" y1="210.3" x2="748.6" y2="-50.6" stroke="#0000c8" stroke-width="0.84" stroke-dasharray="1.76 1.44"/><polygon points="427.80,210.85 748.99,-49.89 750.53,-47.26 428.11,216.05" fill="#0000a8"/><polygon points="427.82,211.24 749.11,-49.70 750.33,-47.59 428.07,215.40" fill="#0000e0"/><polygon points="427.87,212.02 749.34,-49.30 749.99,-48.19 428.00,214.22" fill="#1414ff"/><line x1="428.1" y1="216.7" x2="750.7" y2="-46.9" stroke="#0000c8" stroke-width="0.85" stroke-dasharray="1.77 1.45"/><polygon points="428.19,217.31 751.12,-46.25 752.68,-43.59 428.50,222.58" fill="#0000a8"/><polygon points="428.21,217.70 751.24,-46.05 752.48,-43.92 428.46,221.92" fill="#0000e0"/><polygon points="428.26,218.49 751.47,-45.65 752.13,-44.52 428.39,220.73" fill="#1414ff"/><line x1="428.5" y1="223.2" x2="752.9" y2="-43.3" stroke="#0000c8" stroke-width="0.86" stroke-dasharray="1.79 1.46"/><polygon points="428.57,223.85 753.28,-42.56 754.85,-39.87 428.89,229.20" fill="#0000a8"/><polygon points="428.60,224.25 753.39,-42.36 754.65,-40.21 428.85,228.53" fill="#0000e0"/><polygon points="428.65,225.05 753.63,-41.96 754.30,-40.81 428.78,227.32" fill="#1414ff"/><line x1="428.9" y1="229.9" x2="755.0" y2="-39.5" stroke="#0000c8" stroke-width="0.88" stroke-dasharray="1.80 1.47"/><polygon points="428.97,230.50 755.46,-38.83 757.05,-36.11 429.29,235.92" fill="#0000a8"/><polygon points="428.99,230.90 755.57,-38.63 756.85,-36.45 429.25,235.24" fill="#0000e0"/><polygon points="429.04,231.71 755.81,-38.22 756.49,-37.06 429.18,234.02" fill="#1414ff"/><line x1="429.3" y1="236.6" x2="757.2" y2="-35.8" stroke="#0000c8" stroke-width="0.89" stroke-dasharray="1.81 1.48"/><polygon points="429.37,237.24 757.66,-35.06 759.27,-32.30 429.70,242.74" fill="#0000a8"/><polygon points="429.40,237.65 757.78,-34.85 759.07,-32.65 429.66,242.05" fill="#0000e0"/><polygon points="429.44,238.47 758.02,-34.44 758.70,-33.27 429.58,240.81" fill="#1414ff"/><line x1="429.7" y1="243.4" x2="759.5" y2="-32.0" stroke="#0000c8" stroke-width="0.90" stroke-dasharray="1.83 1.49"/><polygon points="429.78,244.08 759.89,-31.24 761.52,-28.46 430.11,249.66" fill="#0000a8"/><polygon points="429.80,244.49 760.01,-31.03 761.31,-28.81 430.07,248.96" fill="#0000e0"/><polygon points="429.85,245.33 760.26,-30.62 760.95,-29.43 429.99,247.70" fill="#1414ff"/><line x1="430.2" y1="250.4" x2="761.7" y2="-28.1" stroke="#0000c8" stroke-width="0.91" stroke-dasharray="1.84 1.50"/><polygon points="430.19,251.02 762.15,-27.38 763.79,-24.56 430.53,256.69" fill="#0000a8"/><polygon points="430.22,251.44 762.27,-27.17 763.59,-24.92 430.49,255.98" fill="#0000e0"/><polygon points="430.27,252.29 762.52,-26.75 763.22,-25.55 430.41,254.70" fill="#1414ff"/><line x1="430.6" y1="257.4" x2="764.0" y2="-24.2" stroke="#0000c8" stroke-width="0.92" stroke-dasharray="1.85 1.52"/><polygon points="430.61,258.06 764.43,-23.47 766.10,-20.62 430.95,263.82" fill="#0000a8"/><polygon points="430.63,258.49 764.56,-23.26 765.89,-20.98 430.91,263.10" fill="#0000e0"/><polygon points="430.69,259.35 764.80,-22.83 765.51,-21.62 430.83,261.80" fill="#1414ff"/><line x1="431.0" y1="264.5" x2="766.3" y2="-20.3" stroke="#0000c8" stroke-width="0.93" stroke-dasharray="1.87 1.53"/><polygon points="431.03,265.21 766.74,-19.52 768.43,-16.63 431.38,271.06" fill="#0000a8"/><polygon points="431.06,265.65 766.87,-19.30 768.22,-17.00 431.34,270.32" fill="#0000e0"/><polygon points="431.11,266.52 767.12,-18.87 767.84,-17.65 431.26,269.00" fill="#1414ff"/><line x1="431.4" y1="271.8" x2="768.6" y2="-16.3" stroke="#0000c8" stroke-width="0.95" stroke-dasharray="1.88 1.54"/><polygon points="431.47,272.47 769.08,-15.52 770.78,-12.60 431.82,278.41" fill="#0000a8"/><polygon points="431.49,272.91 769.21,-15.30 770.57,-12.97 431.77,277.66" fill="#0000e0"/><polygon points="431.55,273.80 769.46,-14.86 770.19,-13.62 431.70,276.32" fill="#1414ff"/><line x1="431.9" y1="279.2" x2="771.0" y2="-12.2" stroke="#0000c8" stroke-width="0.96" stroke-dasharray="1.90 1.55"/><polygon points="431.90,279.84 771.44,-11.47 773.17,-8.52 432.26,285.87" fill="#0000a8"/><polygon points="431.93,280.29 771.57,-11.25 772.95,-8.89 432.22,285.11" fill="#0000e0"/><polygon points="431.98,281.19 771.83,-10.81 772.56,-9.55 432.14,283.75" fill="#1414ff"/><line x1="432.3" y1="286.6" x2="773.4" y2="-8.1" stroke="#0000c8" stroke-width="0.97" stroke-dasharray="1.91 1.56"/><polygon points="432.35,287.33 773.84,-7.37 775.59,-4.38 432.71,293.44" fill="#0000a8"/><polygon points="432.38,287.78 773.97,-7.15 775.37,-4.76 432.67,292.68" fill="#0000e0"/><polygon points="432.43,288.70 774.23,-6.70 774.97,-5.43 432.59,291.29" fill="#1414ff"/><line x1="432.8" y1="294.2" x2="775.8" y2="-4.0" stroke="#0000c8" stroke-width="0.99" stroke-dasharray="1.93 1.58"/><polygon points="432.80,294.93 776.26,-3.23 778.03,-0.20 433.17,301.14" fill="#0000a8"/><polygon points="432.83,295.39 776.39,-3.00 777.81,-0.58 433.12,300.36" fill="#0000e0"/><polygon points="432.88,296.32 776.66,-2.55 777.41,-1.26 433.04,298.96" fill="#1414ff"/><line x1="433.2" y1="301.9" x2="778.3" y2="0.2" stroke="#0000c8" stroke-width="1.00" stroke-dasharray="1.94 1.59"/><polygon points="433.26,302.64 778.71,0.97 780.51,4.03 433.64,308.96" fill="#0000a8"/><polygon points="433.29,303.11 778.85,1.20 780.28,3.65 433.59,308.16" fill="#0000e0"/><polygon points="433.34,304.06 779.12,1.66 779.88,2.96 433.50,306.74" fill="#1414ff"/><line x1="433.7" y1="309.8" x2="780.7" y2="4.4" stroke="#0000c8" stroke-width="1.01" stroke-dasharray="1.96 1.60"/><polygon points="433.73,310.49 781.20,5.22 783.01,8.32 434.11,316.90" fill="#0000a8"/><polygon points="433.76,310.96 781.33,5.45 782.78,7.93 434.06,316.09" fill="#0000e0"/><polygon points="433.81,311.92 781.60,5.91 782.37,7.23 433.97,314.64" fill="#1414ff"/><line x1="434.2" y1="317.7" x2="783.2" y2="8.7" stroke="#0000c8" stroke-width="1.03" stroke-dasharray="1.97 1.62"/><polygon points="434.20,318.45 783.71,9.52 785.55,12.66 434.59,324.97" fill="#0000a8"/><polygon points="434.23,318.94 783.85,9.75 785.32,12.27 434.54,324.15" fill="#0000e0"/><polygon points="434.29,319.91 784.12,10.22 784.90,11.56 434.45,322.68" fill="#1414ff"/><line x1="434.6" y1="325.8" x2="785.8" y2="13.1" stroke="#0000c8" stroke-width="1.04" stroke-dasharray="1.99 1.63"/><polygon points="434.68,326.54 786.26,13.87 788.11,17.05 435.08,333.16" fill="#0000a8"/><polygon points="434.71,327.04 786.39,14.11 787.88,16.65 435.03,332.33" fill="#0000e0"/><polygon points="434.77,328.03 786.67,14.59 787.46,15.94 434.94,330.84" fill="#1414ff"/><line x1="435.1" y1="334.0" x2="788.3" y2="17.5" stroke="#0000c8" stroke-width="1.06" stroke-dasharray="2.01 1.64"/><polygon points="435.17,334.77 788.83,18.28 790.71,21.50 435.57,341.50" fill="#0000a8"/><polygon points="435.20,335.27 788.97,18.52 790.48,21.10 435.52,340.65" fill="#0000e0"/><polygon points="435.26,336.27 789.25,19.00 790.05,20.37 435.43,339.13" fill="#1414ff"/><line x1="435.6" y1="342.3" x2="791.0" y2="21.9" stroke="#0000c8" stroke-width="1.07" stroke-dasharray="2.02 1.66"/><polygon points="435.67,343.13 791.44,22.75 793.35,26.01 436.07,349.96" fill="#0000a8"/><polygon points="435.70,343.64 791.58,22.99 793.11,25.60 436.02,349.10" fill="#0000e0"/><polygon points="435.76,344.66 791.87,23.48 792.68,24.86 435.93,347.56" fill="#1414ff"/><line x1="436.1" y1="350.8" x2="793.6" y2="26.4" stroke="#0000c8" stroke-width="1.09" stroke-dasharray="2.04 1.67"/><polygon points="436.17,351.62 794.08,27.27 796.01,30.57 436.59,358.57" fill="#0000a8"/><polygon points="436.20,352.14 794.23,27.51 795.77,30.16 436.53,357.70" fill="#0000e0"/><polygon points="436.27,353.18 794.52,28.01 795.34,29.41 436.44,356.13" fill="#1414ff"/><line x1="436.6" y1="359.4" x2="796.3" y2="31.0" stroke="#0000c8" stroke-width="1.10" stroke-dasharray="2.06 1.69"/><polygon points="436.69,360.26 796.76,31.85 798.71,35.19 437.11,367.32" fill="#0000a8"/><polygon points="436.72,360.78 796.91,32.10 798.47,34.77 437.05,366.44" fill="#0000e0"/><polygon points="436.78,361.84 797.20,32.60 798.03,34.02 436.96,364.84" fill="#1414ff"/><line x1="437.2" y1="368.2" x2="799.0" y2="35.6" stroke="#0000c8" stroke-width="1.12" stroke-dasharray="2.08 1.70"/><polygon points="437.21,369.04 799.47,36.48 801.45,39.87 437.64,376.22" fill="#0000a8"/><polygon points="437.24,369.57 799.62,36.74 801.20,39.45 437.58,375.32" fill="#0000e0"/><polygon points="437.30,370.65 799.91,37.24 800.75,38.68 437.49,373.70" fill="#1414ff"/><line x1="437.7" y1="377.1" x2="801.7" y2="40.3" stroke="#0000c8" stroke-width="1.13" stroke-dasharray="2.10 1.71"/><polygon points="437.74,377.96 802.21,41.18 804.22,44.61 438.17,385.27" fill="#0000a8"/><polygon points="437.77,378.51 802.36,41.44 803.97,44.18 438.12,384.35" fill="#0000e0"/><polygon points="437.84,379.60 802.66,41.95 803.52,43.41 438.02,382.70" fill="#1414ff"/><line x1="438.2" y1="386.2" x2="804.5" y2="45.0" stroke="#0000c8" stroke-width="1.15" stroke-dasharray="2.11 1.73"/><polygon points="438.28,387.04 804.99,45.94 807.03,49.42 438.72,394.48" fill="#0000a8"/><polygon points="438.31,387.60 805.15,46.20 806.77,48.98 438.67,393.54" fill="#0000e0"/><polygon points="438.38,388.71 805.45,46.72 806.31,48.20 438.57,391.86" fill="#1414ff"/><line x1="438.8" y1="395.4" x2="807.3" y2="49.9" stroke="#0000c8" stroke-width="1.17" stroke-dasharray="2.13 1.75"/><polygon points="438.83,396.28 807.81,50.76 809.87,54.28 439.28,403.84" fill="#0000a8"/><polygon points="438.86,396.84 807.97,51.02 809.61,53.84 439.22,402.89" fill="#0000e0"/><polygon points="438.93,397.97 808.27,51.55 809.15,53.05 439.12,401.18" fill="#1414ff"/><line x1="439.3" y1="404.8" x2="810.1" y2="54.7" stroke="#0000c8" stroke-width="1.18" stroke-dasharray="2.15 1.76"/><polygon points="439.39,405.67 810.67,55.64 812.75,59.21 439.85,413.37" fill="#0000a8"/><polygon points="439.42,406.25 810.82,55.91 812.49,58.76 439.79,412.40" fill="#0000e0"/><polygon points="439.49,407.40 811.13,56.44 812.02,57.96 439.68,410.66" fill="#1414ff"/><line x1="439.9" y1="414.3" x2="813.0" y2="59.7" stroke="#0000c8" stroke-width="1.20" stroke-dasharray="2.17 1.78"/><polygon points="439.96,415.23 813.56,60.59 815.67,64.21 440.42,423.06" fill="#0000a8"/><polygon points="439.99,415.82 813.72,60.86 815.41,63.75 440.36,422.08" fill="#0000e0"/><polygon points="440.06,416.98 814.03,61.40 814.93,62.94 440.26,420.31" fill="#1414ff"/><line x1="440.5" y1="424.0" x2="815.9" y2="64.7" stroke="#0000c8" stroke-width="1.22" stroke-dasharray="2.19 1.79"/><polygon points="440.53,424.96 816.49,65.61 818.63,69.27 441.01,432.93" fill="#0000a8"/><polygon points="440.57,425.55 816.65,65.88 818.36,68.81 440.95,431.92" fill="#0000e0"/><polygon points="440.64,426.74 816.97,66.43 817.88,67.99 440.84,430.12" fill="#1414ff"/><line x1="441.1" y1="433.9" x2="818.9" y2="69.7" stroke="#0000c8" stroke-width="1.24" stroke-dasharray="2.21 1.81"/><polygon points="441.12,434.86 819.46,70.69 821.63,74.40 441.61,442.97" fill="#0000a8"/><polygon points="441.16,435.46 819.62,70.97 821.36,73.94 441.55,441.95" fill="#0000e0"/><polygon points="441.23,436.67 819.95,71.52 820.87,73.10 441.44,440.12" fill="#1414ff"/><line x1="441.7" y1="444.0" x2="821.9" y2="74.9" stroke="#0000c8" stroke-width="1.26" stroke-dasharray="2.23 1.83"/><polygon points="441.72,444.93 822.47,75.84 824.67,79.60 442.21,453.19" fill="#0000a8"/><polygon points="441.76,445.55 822.63,76.12 824.39,79.13 442.15,452.15" fill="#0000e0"/><polygon points="441.83,446.78 822.96,76.68 823.90,78.28 442.04,450.29" fill="#1414ff"/><line x1="442.3" y1="454.2" x2="824.9" y2="80.1" stroke="#0000c8" stroke-width="1.28" stroke-dasharray="2.25 1.84"/><polygon points="442.33,455.19 825.52,81.06 827.75,84.88 442.83,463.60" fill="#0000a8"/><polygon points="442.37,455.82 825.69,81.35 827.47,84.40 442.77,462.54" fill="#0000e0"/><polygon points="442.44,457.07 826.02,81.92 826.97,83.54 442.66,460.64" fill="#1414ff"/><line x1="442.9" y1="464.7" x2="828.0" y2="85.4" stroke="#0000c8" stroke-width="1.30" stroke-dasharray="2.28 1.86"/><polygon points="442.95,465.64 828.61,86.35 830.87,90.22 443.46,474.20" fill="#0000a8"/><polygon points="442.99,466.27 828.78,86.64 830.59,89.74 443.40,473.12" fill="#0000e0"/><polygon points="443.07,467.55 829.12,87.22 830.08,88.86 443.28,471.19" fill="#1414ff"/><line x1="443.5" y1="475.3" x2="831.2" y2="90.7" stroke="#0000c8" stroke-width="1.32" stroke-dasharray="2.30 1.88"/><polygon points="443.59,476.27 831.75,91.72 834.04,95.64 444.11,484.99" fill="#0000a8"/><polygon points="443.63,476.92 831.92,92.01 833.75,95.15 444.04,483.90" fill="#0000e0"/><polygon points="443.70,478.22 832.26,92.60 833.24,94.26 443.92,481.93" fill="#1414ff"/><line x1="444.2" y1="486.1" x2="834.3" y2="96.1" stroke="#0000c8" stroke-width="1.34" stroke-dasharray="2.32 1.90"/><polygon points="444.23,487.11 834.93,97.16 837.25,101.14 444.76,495.99" fill="#0000a8"/><polygon points="444.27,487.77 835.10,97.46 836.96,100.64 444.69,494.87" fill="#0000e0"/><polygon points="444.35,489.09 835.45,98.05 836.43,99.74 444.57,492.87" fill="#1414ff"/><line x1="444.8" y1="497.1" x2="837.5" y2="101.6" stroke="#0000c8" stroke-width="1.36" stroke-dasharray="2.34 1.92"/><polygon points="444.89,498.14 838.15,102.67 840.51,106.71 445.43,507.20" fill="#0000a8"/><polygon points="444.93,498.82 838.33,102.98 840.21,106.20 445.36,506.06" fill="#0000e0"/><polygon points="445.01,500.17 838.68,103.58 839.68,105.29 445.24,504.01" fill="#1414ff"/><line x1="445.5" y1="508.3" x2="840.8" y2="107.2" stroke="#0000c8" stroke-width="1.38" stroke-dasharray="2.37 1.94"/><polygon points="445.56,509.39 841.42,108.27 843.81,112.36 446.10,518.61" fill="#0000a8"/><polygon points="445.60,510.08 841.60,108.57 843.51,111.84 446.04,517.45" fill="#0000e0"/><polygon points="445.68,511.45 841.96,109.18 842.97,110.92 445.91,515.37" fill="#1414ff"/><line x1="446.2" y1="519.8" x2="844.1" y2="112.9" stroke="#0000c8" stroke-width="1.40" stroke-dasharray="2.39 1.96"/><polygon points="446.24,520.85 844.73,113.94 847.16,118.09 446.80,530.25" fill="#0000a8"/><polygon points="446.28,521.55 844.92,114.25 846.85,117.57 446.73,529.07" fill="#0000e0"/><polygon points="446.36,522.95 845.28,114.87 846.31,116.63 446.60,526.95" fill="#1414ff"/><line x1="446.9" y1="531.4" x2="847.5" y2="118.6" stroke="#0000c8" stroke-width="1.43" stroke-dasharray="2.41 1.98"/><polygon points="446.93,532.53 848.10,119.70 850.56,123.90 447.50,542.12" fill="#0000a8"/><polygon points="446.97,533.25 848.28,120.01 850.25,123.38 447.43,540.91" fill="#0000e0"/><polygon points="447.06,534.68 848.65,120.64 849.69,122.43 447.30,538.74" fill="#1414ff"/><line x1="447.6" y1="543.3" x2="850.9" y2="124.4" stroke="#0000c8" stroke-width="1.45" stroke-dasharray="2.44 2.00"/><polygon points="447.64,544.44 851.51,125.53 854.00,129.80 448.22,554.21" fill="#0000a8"/><polygon points="447.68,545.17 851.69,125.85 853.69,129.27 448.15,552.98" fill="#0000e0"/><polygon points="447.77,546.63 852.07,126.49 853.13,128.30 448.02,550.78" fill="#1414ff"/><line x1="448.3" y1="555.4" x2="854.3" y2="130.3" stroke="#0000c8" stroke-width="1.47" stroke-dasharray="2.46 2.02"/><polygon points="448.36,556.58 854.97,131.45 857.50,135.79 448.96,566.55" fill="#0000a8"/><polygon points="448.41,557.33 855.16,131.78 857.18,135.24 448.88,565.30" fill="#0000e0"/><polygon points="448.50,558.81 855.54,132.42 856.61,134.26 448.75,563.04" fill="#1414ff"/><line x1="449.0" y1="567.8" x2="857.8" y2="136.3" stroke="#0000c8" stroke-width="1.50" stroke-dasharray="2.49 2.04"/><polygon points="449.10,568.97 858.48,137.46 861.05,141.86 449.70,579.13" fill="#0000a8"/><polygon points="449.14,569.72 858.67,137.79 860.73,141.31 449.63,577.85" fill="#0000e0"/><polygon points="449.23,571.24 859.06,138.45 860.15,140.31 449.49,575.56" fill="#1414ff"/><line x1="449.8" y1="580.4" x2="861.4" y2="142.4" stroke="#0000c8" stroke-width="1.52" stroke-dasharray="2.52 2.06"/><polygon points="449.85,581.60 862.04,143.56 864.65,148.02 450.47,591.97" fill="#0000a8"/><polygon points="449.90,582.37 862.24,143.89 864.32,147.46 450.39,590.67" fill="#0000e0"/><polygon points="449.99,583.92 862.63,144.56 863.73,146.45 450.25,588.32" fill="#1414ff"/><line x1="450.5" y1="593.3" x2="865.0" y2="148.6" stroke="#0000c8" stroke-width="1.55" stroke-dasharray="2.54 2.08"/><polygon points="450.62,594.49 865.66,149.75 868.30,154.27 451.25,605.07" fill="#0000a8"/><polygon points="450.66,595.28 865.86,150.08 867.97,153.70 451.17,603.74" fill="#0000e0"/><polygon points="450.76,596.85 866.25,150.76 867.37,152.68 451.03,601.35" fill="#1414ff"/><line x1="451.3" y1="606.4" x2="868.6" y2="154.8" stroke="#0000c8" stroke-width="1.58" stroke-dasharray="2.57 2.10"/><polygon points="451.40,607.64 869.33,156.02 872.01,160.62 452.04,618.44" fill="#0000a8"/><polygon points="451.45,608.44 869.53,156.37 871.68,160.04 451.96,617.08" fill="#0000e0"/><polygon points="451.54,610.05 869.93,157.05 871.07,159.01 451.82,614.64" fill="#1414ff"/><line x1="452.1" y1="619.8" x2="872.4" y2="161.2" stroke="#0000c8" stroke-width="1.60" stroke-dasharray="2.60 2.13"/><polygon points="452.20,621.06 873.05,162.40 875.78,167.06 452.85,632.09" fill="#0000a8"/><polygon points="452.25,621.88 873.26,162.75 875.44,166.48 452.77,630.70" fill="#0000e0"/><polygon points="452.34,623.53 873.66,163.44 874.82,165.42 452.62,628.21" fill="#1414ff"/><line x1="452.9" y1="633.5" x2="876.1" y2="167.6" stroke="#0000c8" stroke-width="1.63" stroke-dasharray="2.63 2.15"/><polygon points="453.01,634.77 876.83,168.87 879.60,173.60 453.68,646.03" fill="#0000a8"/><polygon points="453.06,635.60 877.04,169.22 879.25,173.01 453.60,644.61" fill="#0000e0"/><polygon points="453.16,637.28 877.45,169.93 878.63,171.94 453.45,642.06" fill="#1414ff"/><line x1="453.8" y1="647.4" x2="879.9" y2="174.2" stroke="#0000c8" stroke-width="1.66" stroke-dasharray="2.66 2.18"/><polygon points="453.84,648.76 880.67,175.44 883.48,180.25 454.53,660.26" fill="#0000a8"/><polygon points="453.90,649.61 880.88,175.80 883.13,179.64 454.44,658.81" fill="#0000e0"/><polygon points="454.00,651.33 881.30,176.52 882.50,178.56 454.29,656.21" fill="#1414ff"/><line x1="454.6" y1="661.7" x2="883.8" y2="180.9" stroke="#0000c8" stroke-width="1.69" stroke-dasharray="2.69 2.20"/><polygon points="454.69,663.05 884.57,182.11 887.42,186.99 455.39,674.80" fill="#0000a8"/><polygon points="454.75,663.92 884.78,182.47 887.07,186.38 455.31,673.32" fill="#0000e0"/><polygon points="454.85,665.68 885.21,183.20 886.42,185.28 455.15,670.66" fill="#1414ff"/><line x1="455.5" y1="676.3" x2="887.8" y2="187.6" stroke="#0000c8" stroke-width="1.72" stroke-dasharray="2.72 2.23"/><polygon points="455.56,677.65 888.53,188.88 891.43,193.84 456.28,689.65" fill="#0000a8"/><polygon points="455.62,678.54 888.75,189.25 891.06,193.22 456.19,688.14" fill="#0000e0"/><polygon points="455.72,680.33 889.18,189.99 890.41,192.10 456.03,685.43" fill="#1414ff"/><line x1="456.4" y1="691.2" x2="891.8" y2="194.5" stroke="#0000c8" stroke-width="1.75" stroke-dasharray="2.75 2.25"/><polygon points="456.45,692.57 892.55,195.76 895.49,200.80 457.18,704.84" fill="#0000a8"/><polygon points="456.50,693.48 892.77,196.14 895.12,200.17 457.09,703.29" fill="#0000e0"/><polygon points="456.61,695.31 893.21,196.89 894.46,199.03 456.92,700.52" fill="#1414ff"/><line x1="457.3" y1="706.4" x2="895.9" y2="201.4" stroke="#0000c8" stroke-width="1.78" stroke-dasharray="2.79 2.28"/><polygon points="457.36,707.81 896.63,202.75 899.62,207.87 458.10,720.35" fill="#0000a8"/><polygon points="457.41,708.75 896.86,203.13 899.25,207.22 458.01,718.77" fill="#0000e0"/><polygon points="457.52,710.62 897.30,203.90 898.57,206.07 457.84,715.94" fill="#1414ff"/><line x1="458.2" y1="721.9" x2="900.0" y2="208.5" stroke="#0000c8" stroke-width="1.82" stroke-dasharray="2.82 2.31"/><polygon points="458.28,723.40 900.78,209.85 903.82,215.05 459.05,736.22" fill="#0000a8"/><polygon points="458.34,724.35 901.01,210.24 903.44,214.39 458.95,734.61" fill="#0000e0"/><polygon points="458.45,726.26 901.46,211.01 902.75,213.22 458.78,731.71" fill="#1414ff"/><line x1="459.1" y1="737.8" x2="904.2" y2="215.7" stroke="#0000c8" stroke-width="1.85" stroke-dasharray="2.85 2.33"/><polygon points="459.23,739.34 905.00,217.06 908.08,222.34 460.01,752.45" fill="#0000a8"/><polygon points="459.29,740.31 905.23,217.46 907.70,221.68 459.91,750.80" fill="#0000e0"/><polygon points="459.41,742.27 905.69,218.24 907.00,220.49 459.74,747.83" fill="#1414ff"/><line x1="460.1" y1="754.1" x2="908.5" y2="223.0" stroke="#0000c8" stroke-width="1.89" stroke-dasharray="2.89 2.36"/><polygon points="460.20,755.64 909.28,224.39 912.42,229.76 461.00,769.05" fill="#0000a8"/><polygon points="460.26,756.63 909.51,224.79 912.02,229.08 460.90,767.36" fill="#0000e0"/><polygon points="460.38,758.63 909.98,225.59 911.32,227.87 460.72,764.33" fill="#1414ff"/><line x1="461.1" y1="770.7" x2="912.8" y2="230.4" stroke="#0000c8" stroke-width="1.92" stroke-dasharray="2.92 2.39"/><polygon points="461.19,772.31 913.63,231.84 916.82,237.30 462.01,786.04" fill="#0000a8"/><polygon points="461.25,773.33 913.87,232.25 916.42,236.61 461.91,784.31" fill="#0000e0"/><polygon points="461.38,775.38 914.35,233.06 915.70,235.38 461.72,781.21" fill="#1414ff"/><line x1="462.1" y1="787.8" x2="917.2" y2="238.0" stroke="#0000c8" stroke-width="1.96" stroke-dasharray="2.96 2.42"/><polygon points="462.21,789.38 918.06,239.41 921.30,244.96 463.04,803.43" fill="#0000a8"/><polygon points="462.27,790.42 918.30,239.82 920.89,244.26 462.94,801.66" fill="#0000e0"/><polygon points="462.39,792.52 918.78,240.65 920.16,243.01 462.75,798.48" fill="#1414ff"/><line x1="463.1" y1="805.2" x2="921.7" y2="245.7" stroke="#0000c8" stroke-width="2.00" stroke-dasharray="3.00 2.45"/><polygon points="463.25,806.85 922.55,247.10 925.85,252.74 464.10,821.23" fill="#0000a8"/><polygon points="463.31,807.92 922.80,247.53 925.44,252.03 463.99,819.42" fill="#0000e0"/><polygon points="463.44,810.06 923.29,248.37 924.69,250.76 463.80,816.17" fill="#1414ff"/><line x1="464.2" y1="823.1" x2="926.3" y2="253.5" stroke="#0000c8" stroke-width="2.04" stroke-dasharray="3.04 2.49"/><polygon points="464.31,824.73 927.13,254.93 930.48,260.66 465.19,839.47" fill="#0000a8"/><polygon points="464.38,825.83 927.38,255.36 930.06,259.94 465.08,837.61" fill="#0000e0"/><polygon points="464.51,828.02 927.88,256.21 929.30,258.65 464.88,834.28" fill="#1414ff"/><line x1="465.3" y1="841.3" x2="930.9" y2="261.4" stroke="#0000c8" stroke-width="2.08" stroke-dasharray="3.08 2.52"/><polygon points="465.40,843.05 931.78,262.88 935.18,268.71 466.30,858.14" fill="#0000a8"/><polygon points="465.47,844.17 932.03,263.32 934.76,267.98 466.18,856.24" fill="#0000e0"/><polygon points="465.60,846.42 932.54,264.19 933.99,266.67 465.98,852.83" fill="#1414ff"/><line x1="466.4" y1="860.1" x2="935.6" y2="269.4" stroke="#0000c8" stroke-width="2.12" stroke-dasharray="3.12 2.55"/><polygon points="466.52,861.81 936.50,270.97 939.97,276.90 467.44,877.28" fill="#0000a8"/><polygon points="466.58,862.96 936.76,271.42 939.53,276.16 467.32,875.33" fill="#0000e0"/><polygon points="466.72,865.27 937.28,272.30 938.75,274.82 467.11,871.83" fill="#1414ff"/><line x1="467.6" y1="879.2" x2="940.4" y2="277.7" stroke="#0000c8" stroke-width="2.16" stroke-dasharray="3.16 2.59"/><polygon points="467.66,881.04 941.31,279.20 944.84,285.24 468.60,896.90" fill="#0000a8"/><polygon points="467.73,882.22 941.58,279.65 944.40,284.48 468.48,894.90" fill="#0000e0"/><polygon points="467.87,884.58 942.10,280.55 943.60,283.12 468.27,891.31" fill="#1414ff"/><line x1="468.7" y1="898.9" x2="945.3" y2="286.0" stroke="#0000c8" stroke-width="2.20" stroke-dasharray="3.20 2.62"/><polygon points="468.83,900.75 946.20,287.57 949.79,293.71 469.80,917.01" fill="#0000a8"/><polygon points="468.90,901.96 946.47,288.03 949.34,292.94 469.68,914.96" fill="#0000e0"/><polygon points="469.05,904.38 947.01,288.95 948.53,291.55 469.46,911.28" fill="#1414ff"/><line x1="469.9" y1="919.1" x2="950.2" y2="294.5" stroke="#0000c8" stroke-width="2.25" stroke-dasharray="3.25 2.66"/><polygon points="470.03,920.97 951.18,296.09 954.83,302.34 471.03,937.64" fill="#0000a8"/><polygon points="470.11,922.20 951.45,296.56 954.37,301.55 470.90,935.54" fill="#0000e0"/><polygon points="470.25,924.69 952.00,297.49 953.55,300.14 470.68,931.77" fill="#1414ff"/><line x1="471.2" y1="939.7" x2="955.3" y2="303.1" stroke="#0000c8" stroke-width="2.30" stroke-dasharray="3.29 2.70"/><polygon points="471.27,941.70 956.25,304.76 959.96,311.11 472.28,958.81" fill="#0000a8"/><polygon points="471.34,942.97 956.52,305.23 959.49,310.31 472.16,956.65" fill="#0000e0"/><polygon points="471.49,945.52 957.08,306.18 958.65,308.88 471.93,952.78" fill="#1414ff"/><line x1="472.4" y1="961.0" x2="960.4" y2="311.9" stroke="#0000c8" stroke-width="2.34" stroke-dasharray="3.34 2.73"/><polygon points="472.53,962.97 961.40,313.58 965.18,320.04 473.58,980.53" fill="#0000a8"/><polygon points="472.61,964.27 961.68,314.06 964.71,319.23 473.44,978.31" fill="#0000e0"/><polygon points="472.76,966.89 962.25,315.02 963.85,317.77 473.21,974.34" fill="#1414ff"/><line x1="473.7" y1="982.8" x2="965.7" y2="320.9" stroke="#0000c8" stroke-width="2.39" stroke-dasharray="3.39 2.77"/><polygon points="473.83,984.80 966.65,322.55 970.49,329.14 474.90,1002.83" fill="#0000a8"/><polygon points="473.91,986.14 966.93,323.04 970.01,328.31 474.77,1000.56" fill="#0000e0"/><polygon points="474.07,988.83 967.51,324.03 969.14,326.82 474.52,996.48" fill="#1414ff"/><line x1="475.0" y1="1005.1" x2="971.0" y2="330.0" stroke="#0000c8" stroke-width="2.44" stroke-dasharray="3.44 2.81"/><polygon points="475.16,1007.22 971.99,331.69 975.90,338.40 476.26,1025.74" fill="#0000a8"/><polygon points="475.24,1008.60 972.28,332.19 975.41,337.55 476.13,1023.40" fill="#0000e0"/><polygon points="475.41,1011.35 972.86,333.19 974.53,336.04 475.88,1019.21" fill="#1414ff"/><line x1="476.4" y1="1028.1" x2="976.4" y2="339.2" stroke="#0000c8" stroke-width="2.50" stroke-dasharray="3.49 2.86"/><polygon points="476.53,1030.25 977.42,341.00 981.41,347.82 477.66,1049.27" fill="#0000a8"/><polygon points="476.62,1031.66 977.72,341.50 980.91,346.97 477.52,1046.87" fill="#0000e0"/><polygon points="476.79,1034.49 978.32,342.52 980.01,345.42 477.27,1042.56" fill="#1414ff"/><line x1="477.8" y1="1051.7" x2="981.9" y2="348.7" stroke="#0000c8" stroke-width="2.55" stroke-dasharray="3.54 2.90"/><polygon points="477.94,1053.90 982.96,350.47 987.03,357.43 479.10,1073.46" fill="#0000a8"/><polygon points="478.03,1055.36 983.26,350.99 986.51,356.55 478.96,1070.99" fill="#0000e0"/><polygon points="478.20,1058.27 983.87,352.03 985.60,354.98 478.69,1066.57" fill="#1414ff"/><line x1="479.2" y1="1075.9" x2="987.5" y2="358.3" stroke="#0000c8" stroke-width="2.61" stroke-dasharray="3.60 2.94"/><polygon points="479.39,1078.22 988.60,360.12 992.74,367.21 480.58,1098.33" fill="#0000a8"/><polygon points="479.47,1079.71 988.91,360.65 992.22,366.32 480.43,1095.79" fill="#0000e0"/><polygon points="479.65,1082.71 989.53,361.71 991.29,364.72 480.16,1091.24" fill="#1414ff"/><line x1="480.7" y1="1100.9" x2="993.3" y2="368.1" stroke="#0000c8" stroke-width="2.67" stroke-dasharray="3.65 2.99"/><polygon points="480.87,1103.23 994.35,369.95 998.57,377.17 482.10,1123.91" fill="#0000a8"/><polygon points="480.96,1104.76 994.66,370.49 998.04,376.26 481.95,1121.30" fill="#0000e0"/><polygon points="481.15,1107.84 995.29,371.57 997.08,374.63 481.67,1116.62" fill="#1414ff"/><line x1="482.3" y1="1126.5" x2="999.1" y2="378.1" stroke="#0000c8" stroke-width="2.73" stroke-dasharray="3.71 3.04"/><polygon points="482.40,1128.95 1000.20,379.97 1004.50,387.33 483.67,1150.23" fill="#0000a8"/><polygon points="482.50,1130.53 1000.52,380.52 1003.96,386.40 483.51,1147.54" fill="#0000e0"/><polygon points="482.68,1133.69 1001.16,381.62 1002.99,384.74 483.22,1142.73" fill="#1414ff"/><line x1="483.8" y1="1152.9" x2="1005.0" y2="388.3" stroke="#0000c8" stroke-width="2.79" stroke-dasharray="3.77 3.09"/><polygon points="483.98,1155.42 1006.17,390.18 1010.55,397.68 485.28,1177.33" fill="#0000a8"/><polygon points="484.07,1157.04 1006.49,390.74 1010.00,396.73 485.12,1174.56" fill="#0000e0"/><polygon points="484.27,1160.30 1007.15,391.86 1009.01,395.04 484.82,1169.60" fill="#1414ff"/><line x1="485.4" y1="1180.1" x2="1011.1" y2="398.6" stroke="#0000c8" stroke-width="2.85" stroke-dasharray="3.83 3.14"/><polygon points="485.60,1182.67 1012.25,400.59 1016.71,408.23 486.94,1205.23" fill="#0000a8"/><polygon points="485.70,1184.34 1012.58,401.15 1016.15,407.27 486.77,1202.38" fill="#0000e0"/><polygon points="485.90,1187.70 1013.25,402.30 1015.14,405.54 486.47,1197.27" fill="#1414ff"/><line x1="487.1" y1="1208.1" x2="1017.3" y2="409.2" stroke="#0000c8" stroke-width="2.92" stroke-dasharray="3.90 3.19"/><polygon points="487.27,1210.73 1018.45,411.19 1023.00,418.98 488.65,1233.99" fill="#0000a8"/><polygon points="487.37,1212.46 1018.79,411.77 1022.43,418.00 488.47,1231.05" fill="#0000e0"/><polygon points="487.57,1215.92 1019.47,412.94 1021.40,416.24 488.16,1225.78" fill="#1414ff"/><line x1="488.8" y1="1236.9" x2="1023.6" y2="420.0" stroke="#0000c8" stroke-width="2.99" stroke-dasharray="3.96 3.24"/><polygon points="488.99,1239.66 1024.77,422.01 1029.41,429.95 490.41,1263.62" fill="#0000a8"/><polygon points="489.09,1241.43 1025.11,422.60 1028.83,428.95 490.23,1260.60" fill="#0000e0"/><polygon points="489.30,1245.00 1025.81,423.78 1027.78,427.16 489.91,1255.17" fill="#1414ff"/><line x1="490.6" y1="1266.7" x2="1030.0" y2="431.0" stroke="#0000c8" stroke-width="3.06" stroke-dasharray="4.03 3.30"/><polygon points="490.76,1269.47 1031.21,433.04 1035.95,441.14 492.23,1294.19" fill="#0000a8"/><polygon points="490.87,1271.30 1031.57,433.64 1035.35,440.12 492.04,1291.06" fill="#0000e0"/><polygon points="491.09,1274.98 1032.27,434.85 1034.28,438.29 491.71,1285.47" fill="#1414ff"/><line x1="492.4" y1="1297.3" x2="1036.5" y2="442.2" stroke="#0000c8" stroke-width="3.13" stroke-dasharray="4.10 3.36"/><polygon points="492.59,1300.22 1037.79,444.29 1042.62,452.55 494.11,1325.72" fill="#0000a8"/><polygon points="492.70,1302.11 1038.15,444.90 1042.01,451.51 493.91,1322.50" fill="#0000e0"/><polygon points="492.93,1305.90 1038.87,446.14 1040.92,449.65 493.57,1316.72" fill="#1414ff"/><line x1="494.3" y1="1329.0" x2="1043.2" y2="453.6" stroke="#0000c8" stroke-width="3.21" stroke-dasharray="4.17 3.41"/><polygon points="494.48,1331.95 1044.49,455.76 1049.42,464.20 496.04,1358.28" fill="#0000a8"/><polygon points="494.59,1333.90 1044.86,456.39 1048.80,463.14 495.84,1354.95" fill="#0000e0"/><polygon points="494.82,1337.81 1045.60,457.65 1047.69,461.23 495.49,1348.98" fill="#1414ff"/><line x1="496.2" y1="1361.6" x2="1050.0" y2="465.3" stroke="#0000c8" stroke-width="3.29" stroke-dasharray="4.25 3.48"/><polygon points="496.42,1364.70 1051.34,467.48 1056.37,476.09 498.04,1391.90" fill="#0000a8"/><polygon points="496.54,1366.72 1051.71,468.12 1055.74,475.00 497.84,1388.46" fill="#0000e0"/><polygon points="496.78,1370.76 1052.46,469.40 1054.60,473.06 497.47,1382.30" fill="#1414ff"/><line x1="498.2" y1="1395.3" x2="1057.0" y2="477.2" stroke="#0000c8" stroke-width="3.37" stroke-dasharray="4.33 3.54"/><polygon points="498.44,1398.54 1058.32,479.43 1063.46,488.22 500.11,1426.64" fill="#0000a8"/><polygon points="498.56,1400.62 1058.71,480.08 1062.81,487.11 499.90,1423.09" fill="#0000e0"/><polygon points="498.81,1404.79 1059.47,481.40 1061.65,485.13 499.52,1416.72" fill="#1414ff"/><line x1="500.3" y1="1430.2" x2="1064.1" y2="489.3" stroke="#0000c8" stroke-width="3.46" stroke-dasharray="4.41 3.61"/><polygon points="500.52,1433.50 1065.46,491.63 1070.70,500.61 502.24,1462.56" fill="#0000a8"/><polygon points="500.64,1435.65 1065.85,492.30 1070.04,499.48 502.02,1458.88" fill="#0000e0"/><polygon points="500.90,1439.97 1066.63,493.64 1068.86,497.45 501.63,1452.30" fill="#1414ff"/><line x1="502.5" y1="1466.2" x2="1071.4" y2="501.7" stroke="#0000c8" stroke-width="3.55" stroke-dasharray="4.49 3.67"/><polygon points="502.67,1469.66 1072.74,504.09 1078.09,513.26 504.45,1499.72" fill="#0000a8"/><polygon points="502.80,1471.88 1073.14,504.77 1077.42,512.10 504.23,1495.92" fill="#0000e0"/><polygon points="503.06,1476.35 1073.93,506.14 1076.21,510.03 503.82,1489.10" fill="#1414ff"/><line x1="504.7" y1="1503.5" x2="1078.8" y2="514.4" stroke="#0000c8" stroke-width="3.64" stroke-dasharray="4.58 3.75"/><polygon points="504.89,1507.06 1080.17,516.82 1085.64,526.18 506.74,1538.19" fill="#0000a8"/><polygon points="505.03,1509.37 1080.58,517.51 1084.96,525.00 506.51,1534.25" fill="#0000e0"/><polygon points="505.30,1513.99 1081.40,518.91 1083.72,522.88 506.09,1527.19" fill="#1414ff"/><line x1="507.0" y1="1542.1" x2="1086.3" y2="527.4" stroke="#0000c8" stroke-width="3.74" stroke-dasharray="4.67 3.82"/><polygon points="507.19,1545.79 1087.77,529.81 1093.36,539.38 509.11,1578.03" fill="#0000a8"/><polygon points="507.34,1548.18 1088.19,530.53 1092.66,538.18 508.87,1573.95" fill="#0000e0"/><polygon points="507.62,1552.96 1089.02,531.95 1091.39,536.02 508.43,1566.64" fill="#1414ff"/><line x1="509.4" y1="1582.1" x2="1094.1" y2="540.6" stroke="#0000c8" stroke-width="3.84" stroke-dasharray="4.76 3.90"/><polygon points="509.58,1585.90 1095.53,543.10 1101.24,552.87 511.57,1619.31" fill="#0000a8"/><polygon points="509.73,1588.38 1095.96,543.82 1100.52,551.64 511.31,1615.08" fill="#0000e0"/><polygon points="510.02,1593.34 1096.81,545.28 1099.23,549.43 510.86,1607.51" fill="#1414ff"/><line x1="511.8" y1="1623.6" x2="1102.0" y2="554.1" stroke="#0000c8" stroke-width="3.94" stroke-dasharray="4.86 3.98"/><polygon points="512.05,1627.48 1103.46,556.67 1109.30,566.66 514.11,1662.13" fill="#0000a8"/><polygon points="512.20,1630.05 1103.90,557.41 1108.57,565.40 513.85,1657.75" fill="#0000e0"/><polygon points="512.51,1635.19 1104.77,558.90 1107.25,563.15 513.38,1649.89" fill="#1414ff"/><line x1="514.4" y1="1666.5" x2="1110.0" y2="567.9" stroke="#0000c8" stroke-width="4.05" stroke-dasharray="4.96 4.06"/><polygon points="514.62,1670.61 1111.57,570.55 1117.54,580.76 516.76,1706.57" fill="#0000a8"/><polygon points="514.77,1673.27 1112.02,571.31 1116.79,579.48 516.48,1702.02" fill="#0000e0"/><polygon points="515.09,1678.61 1112.91,572.83 1115.44,577.17 516.00,1693.86" fill="#1414ff"/><line x1="517.0" y1="1711.1" x2="1118.3" y2="582.1" stroke="#0000c8" stroke-width="4.17" stroke-dasharray="5.06 4.14"/><polygon points="517.28,1715.37 1119.86,584.73 1125.97,595.18 519.50,1752.72" fill="#0000a8"/><polygon points="517.44,1718.13 1120.32,585.51 1125.20,593.87 519.22,1747.99" fill="#0000e0"/><polygon points="517.77,1723.67 1121.23,587.07 1123.82,591.50 518.71,1739.52" fill="#1414ff"/><line x1="519.8" y1="1757.5" x2="1126.7" y2="596.5" stroke="#0000c8" stroke-width="4.28" stroke-dasharray="5.17 4.23"/><polygon points="520.04,1761.86 1128.34,599.24 1134.59,609.93 522.35,1800.68" fill="#0000a8"/><polygon points="520.21,1764.73 1128.81,600.04 1133.80,608.59 522.06,1795.76" fill="#0000e0"/><polygon points="520.56,1770.49 1129.74,601.63 1132.39,606.17 521.54,1786.95" fill="#1414ff"/><line x1="522.6" y1="1805.6" x2="1135.4" y2="611.3" stroke="#0000c8" stroke-width="4.41" stroke-dasharray="5.29 4.33"/><polygon points="522.92,1810.18 1137.02,614.09 1143.41,625.02 525.32,1850.55" fill="#0000a8"/><polygon points="523.09,1813.16 1137.49,614.90 1142.60,623.65 525.01,1845.44" fill="#0000e0"/><polygon points="523.45,1819.15 1138.45,616.53 1141.16,621.17 524.47,1836.28" fill="#1414ff"/><line x1="525.6" y1="1855.7" x2="1144.2" y2="626.4" stroke="#0000c8" stroke-width="4.54" stroke-dasharray="5.41 4.42"/><polygon points="525.91,1860.44 1145.89,629.28 1152.44,640.47 528.41,1902.47" fill="#0000a8"/><polygon points="526.09,1863.55 1146.38,630.11 1151.61,639.06 528.09,1897.14" fill="#0000e0"/><polygon points="526.46,1869.78 1147.36,631.78 1150.13,636.53 527.52,1887.60" fill="#1414ff"/><line x1="528.7" y1="1907.8" x2="1153.3" y2="641.9" stroke="#0000c8" stroke-width="4.67" stroke-dasharray="5.53 4.53"/></g><polygon points="783.58,55.28 822.86,52.83 1183.03,650.12 1114.03,657.84" fill="#121228"/><polygon points="783.96,55.26 787.87,55.01 1121.57,657.00 1114.70,657.77" fill="#0606e8"/><polygon points="785.01,55.19 786.68,55.09 1119.48,657.23 1116.54,657.56" fill="#1616ff"/><polygon points="788.72,54.96 792.62,54.72 1129.94,656.06 1123.08,656.83" fill="#0606e8"/><polygon points="789.77,54.90 791.44,54.79 1127.85,656.30 1124.92,656.62" fill="#1616ff"/><polygon points="793.48,54.66 797.38,54.42 1138.30,655.13 1131.45,655.89" fill="#0606e8"/><polygon points="794.53,54.60 796.19,54.49 1136.21,655.36 1133.29,655.69" fill="#1616ff"/><polygon points="798.10,54.37 800.67,54.21 1144.09,654.48 1139.58,654.98" fill="#0a0af8"/><polygon points="801.24,54.18 803.80,54.02 1149.59,653.86 1145.08,654.37" fill="#0a0af8"/><polygon points="804.37,53.98 806.93,53.82 1155.08,653.25 1150.58,653.75" fill="#0a0af8"/><polygon points="807.49,53.79 810.06,53.63 1160.57,652.63 1156.07,653.14" fill="#0a0af8"/><polygon points="810.62,53.59 813.18,53.43 1166.06,652.02 1161.56,652.52" fill="#0a0af8"/><polygon points="813.75,53.40 816.31,53.24 1171.54,651.40 1167.04,651.91" fill="#0a0af8"/><polygon points="816.87,53.20 819.43,53.04 1177.01,650.79 1172.52,651.29" fill="#0a0af8"/><polygon points="819.99,53.01 822.55,52.85 1182.48,650.18 1177.99,650.68" fill="#0a0af8"/><polygon points="491.31,724.35 1182.06,647.18 1199.64,676.31 494.00,756.90" fill="#000040"/><polygon points="491.64,728.34 1184.21,650.75 1185.71,653.23 491.87,731.10" fill="rgb(0,0,144)"/><polygon points="491.86,730.94 1185.62,653.08 1187.12,655.57 492.08,733.72" fill="rgb(0,0,211)"/><polygon points="492.07,733.56 1187.03,655.42 1188.54,657.92 492.30,736.34" fill="rgb(4,4,241)"/><polygon points="492.29,736.18 1188.45,657.77 1189.96,660.28 492.52,738.97" fill="rgb(13,13,254)"/><polygon points="492.51,738.81 1189.88,660.13 1191.39,662.64 492.74,741.62" fill="rgb(10,10,248)"/><polygon points="492.73,741.46 1191.30,662.50 1192.82,665.02 492.96,744.27" fill="rgb(4,4,241)"/><polygon points="492.94,744.11 1192.74,664.87 1194.26,667.40 493.18,746.94" fill="rgb(1,1,202)"/><polygon points="493.17,746.77 1194.17,667.25 1195.71,669.79 493.40,749.61" fill="rgb(0,0,115)"/><polygon points="914.73,47.08 918.54,46.85 1081.51,267.81 1076.61,268.21" fill="#0a0aff"/><g>
<path d="M99 615.5 L99 603.5 L96.8 603.5 L101.6 594 L107 603.5 L104.6 603.5 L104.6 615.5 Z" fill="#00008e"/>
<path d="M99.5 603 L101.6 595 L104 603 Z" fill="#1414c8"/>
<path d="M100.2 578.5 H103.5 L100.5 586 H103.8 M100.2 586.5 H104 L101 591.5 H104" stroke="#1010c0" stroke-width="1.8" fill="none"/>
<path d="M103.5 610.5 L124 609 L123.5 605.8 L134.5 613 L124.5 618.5 L124.2 615.2 L103.5 616 Z" fill="#005e00"/>
<path d="M103.5 610.5 L124 609 L124.2 612 L103.5 613 Z" fill="#0a780a"/>
<path d="M143.5 606 L147 611 L151.5 606 M147 611 V615.5" stroke="#0e6e0e" stroke-width="1.6" fill="none"/>
<path d="M99.3 615.5 L104.5 615.5 L106.2 628 L110.2 632.5 L105.8 639.5 L98.8 631.5 L101.6 628 Z" fill="#8c0000"/>
<path d="M99.3 615.5 L104.5 615.5 L105.5 628 L101.5 628 Z" fill="#cc1414"/>
<path d="M105 643 H108.5 M106.5 643 L106.8 656.5 M104.6 650 H108.6" stroke="#a00a0a" stroke-width="1.8" fill="none"/>
</g></svg>
<div style="position:absolute;left:1086px;top:130px;width:446px;height:549px;background:#fff;border:1px solid #d9d9d9;box-sizing:border-box"></div>
<div style="position:absolute;left:1088px;top:112px;width:123px;height:19px;background:#f0f0f0;border:1px solid #d9d9d9;border-bottom:none;box-sizing:border-box"></div>
<div style="position:absolute;left:1210px;top:112px;width:56px;height:19px;background:#f0f0f0;border:1px solid #d9d9d9;border-bottom:none;box-sizing:border-box"></div>
<div style="position:absolute;left:1365px;top:112px;width:101px;height:19px;background:#f0f0f0;border:1px solid #d9d9d9;border-bottom:none;box-sizing:border-box"></div>
<div style="position:absolute;left:1465px;top:112px;width:38px;height:19px;background:#f0f0f0;border:1px solid #d9d9d9;border-bottom:none;box-sizing:border-box"></div>
<div class="t" style="left:1094px;top:116.19px;font-size:11px;line-height:11px;color:#000;font-weight:normal;font-family:'Liberation Sans', sans-serif;">Размещение объекта</div>
<div class="t" style="left:1216px;top:116.19px;font-size:11px;line-height:11px;color:#000;font-weight:normal;font-family:'Liberation Sans', sans-serif;">Слайсер</div>
<div class="t" style="left:1372px;top:116.19px;font-size:11px;line-height:11px;color:#000;font-weight:normal;font-family:'Liberation Sans', sans-serif;">Редактор G-Кода</div>
<div class="t" style="left:1471px;top:116.19px;font-size:11px;line-height:11px;color:#000;font-weight:normal;font-family:'Liberation Sans', sans-serif;">Управ</div>
<div style="position:absolute;left:1265px;top:110px;width:101px;height:21px;background:#fff;border:1px solid #d9d9d9;border-bottom:none;box-sizing:border-box"></div>
<div class="t" style="left:1272px;top:114.69px;font-size:11px;line-height:11px;color:#000;font-weight:normal;font-family:'Liberation Sans', sans-serif;">Просмотр печати</div>
<div style="position:absolute;left:1501px;top:112px;width:32px;height:16px;background:#f0f0f0"></div>
<div style="position:absolute;left:1501px;top:112px;width:16px;height:16px;background:#e8e8e8;border:1px solid #c8c8c8;box-sizing:border-box"></div>
<div style="position:absolute;left:1517px;top:112px;width:16px;height:16px;background:#e8e8e8;border:1px solid #c8c8c8;box-sizing:border-box"></div>
<svg style="left:1501px;top:112px" width="32" height="16"><path d="M10 5 L6.5 8 L10 11 Z" fill="#000"/><path d="M22 5 L25.5 8 L22 11 Z" fill="#000"/></svg>
<div style="position:absolute;left:1094px;top:136px;width:212px;height:24px;background:#cccccc;border:1px solid #bfbfbf;box-sizing:border-box"></div>
<div style="position:absolute;left:1314px;top:136px;width:212px;height:24px;background:#e1e1e1;border:1px solid #adadad;box-sizing:border-box"></div>
<div style="position:absolute;left:1094px;top:168px;width:212px;height:24px;background:#e1e1e1;border:1px solid #adadad;box-sizing:border-box"></div>
<div style="position:absolute;left:1314px;top:168px;width:212px;height:24px;background:#e1e1e1;border:1px solid #adadad;box-sizing:border-box"></div>
<div class="t" style="left:1175px;top:140.80px;font-size:15px;line-height:15px;color:#838383;font-weight:normal;font-family:'Liberation Sans', sans-serif;">Печать</div>
<div class="t" style="left:1356px;top:140.80px;font-size:15px;line-height:15px;color:#000;font-weight:normal;font-family:'Liberation Sans', sans-serif;">Изменить G-Code</div>
<div class="t" style="left:1135px;top:172.80px;font-size:15px;line-height:15px;color:#000;font-weight:normal;font-family:'Liberation Sans', sans-serif;">Сохранить в файл</div>
<div class="t" style="left:1324px;top:172.80px;font-size:15px;line-height:15px;color:#000;font-weight:normal;font-family:'Liberation Sans', sans-serif;">Записать для печати с SD</div>
<svg style="left:1094px;top:136px" width="432" height="56" viewBox="1094 136 432 56">
<path d="M1099 141.5 L1111 149 L1099 156.5 Z" fill="#9a9a9a"/>
<path d="M1320.5 141.5 H1328 L1331 144.5 V154.5 H1320.5 Z" fill="none" stroke="#666" stroke-width="1"/>
<path d="M1327.5 141.5 V145 H1331" fill="none" stroke="#666" stroke-width="1"/>
<path d="M1322.5 147.5 H1329 M1322.5 149.5 H1329 M1322.5 151.5 H1329" stroke="#666" stroke-width="0.8"/>
<path d="M1099.5 173.5 H1108.5 L1111 176 V186.5 H1099.5 Z" fill="none" stroke="#777" stroke-width="1.2"/>
<rect x="1102" y="173.5" width="5" height="3.5" fill="none" stroke="#777" stroke-width="1"/>
<rect x="1101.5" y="181" width="7.5" height="5" fill="none" stroke="#777" stroke-width="1"/>
<path d="M1319.5 173.5 H1328.5 L1331 176 V186.5 H1319.5 Z" fill="none" stroke="#777" stroke-width="1.2"/>
<rect x="1322" y="173.5" width="5" height="3.5" fill="#777"/>
<rect x="1321.5" y="181" width="7.5" height="5" fill="none" stroke="#777" stroke-width="1"/>
</svg>
<div style="position:absolute;left:1100px;top:258px;width:420px;height:112px;border:1px solid #dcdcdc;box-sizing:border-box"></div>
<div style="position:absolute;left:1106px;top:250px;width:156px;height:14px;background:#fff"></div>
<div class="t" style="left:1109px;top:251.88px;font-size:15.5px;line-height:15.5px;color:#000;font-weight:bold;font-family:'Liberation Sans', sans-serif;letter-spacing:0.25px">Статистика печати</div>
<div class="t" style="left:1117px;top:279.30px;font-size:15px;line-height:15px;color:#000;font-weight:normal;font-family:'Liberation Sans', sans-serif;">Расчетное время:</div>
<div class="t" style="left:1314px;top:279.30px;font-size:15px;line-height:15px;color:#000;font-weight:normal;font-family:'Liberation Sans', sans-serif;">3 ч:22 мин:39 с</div>
<div class="t" style="left:1117px;top:299.30px;font-size:15px;line-height:15px;color:#000;font-weight:normal;font-family:'Liberation Sans', sans-serif;">Слоев:</div>
<div class="t" style="left:1314px;top:299.30px;font-size:15px;line-height:15px;color:#000;font-weight:normal;font-family:'Liberation Sans', sans-serif;">208</div>
<div class="t" style="left:1117px;top:319.30px;font-size:15px;line-height:15px;color:#000;font-weight:normal;font-family:'Liberation Sans', sans-serif;">Всего строк:</div>
<div class="t" style="left:1314px;top:319.30px;font-size:15px;line-height:15px;color:#000;font-weight:normal;font-family:'Liberation Sans', sans-serif;">28461</div>
<div class="t" style="left:1117px;top:339.30px;font-size:15px;line-height:15px;color:#000;font-weight:normal;font-family:'Liberation Sans', sans-serif;">Длина прутка:</div>
<div class="t" style="left:1314px;top:339.30px;font-size:15px;line-height:15px;color:#000;font-weight:normal;font-family:'Liberation Sans', sans-serif;">19035 mm</div>
<div style="position:absolute;left:1100px;top:399px;width:420px;height:191px;border:1px solid #dcdcdc;box-sizing:border-box"></div>
<div style="position:absolute;left:1106px;top:391px;width:118px;height:14px;background:#fff"></div>
<div class="t" style="left:1109px;top:392.88px;font-size:15.5px;line-height:15.5px;color:#000;font-weight:bold;font-family:'Liberation Sans', sans-serif;">Визуализация</div>
<div style="position:absolute;left:1117px;top:423px;width:13px;height:13px;border:1px solid #333;box-sizing:border-box;background:#fff"></div>
<div class="t" style="left:1136px;top:422.64px;font-size:14.6px;line-height:14.6px;color:#000;font-weight:normal;font-family:'Liberation Sans', sans-serif;">Визуализация перемещений</div>
<svg style="left:1116px;top:445.7px" width="14" height="14"><circle cx="7" cy="7" r="5.8" fill="#fff" stroke="#333" stroke-width="1"/></svg>
<div class="t" style="left:1136px;top:445.96px;font-size:15.4px;line-height:15.4px;color:#000;font-weight:normal;font-family:'Liberation Sans', sans-serif;">Показать весь код</div>
<svg style="left:1116px;top:470.7px" width="14" height="14"><circle cx="7" cy="7" r="5.8" fill="#fff" stroke="#333" stroke-width="1"/></svg>
<div class="t" style="left:1136px;top:470.96px;font-size:15.4px;line-height:15.4px;color:#000;font-weight:normal;font-family:'Liberation Sans', sans-serif;">Показать один слой</div>
<svg style="left:1116px;top:495.7px" width="14" height="14"><circle cx="7" cy="7" r="5.8" fill="#fff" stroke="#333" stroke-width="1"/><circle cx="7" cy="7" r="3.2" fill="#333"/></svg>
<div class="t" style="left:1136px;top:495.96px;font-size:15.4px;line-height:15.4px;color:#000;font-weight:normal;font-family:'Liberation Sans', sans-serif;">Показать диапазон слоев</div>
<div style="position:absolute;left:1225px;top:520px;width:59px;height:20px;background:#fff;border:1px solid #a8a8a8;box-sizing:border-box"></div>
<div style="position:absolute;left:1268px;top:522px;width:14px;height:16px;background:#f0f0f0;border:1px solid #d4d4d4;box-sizing:border-box"></div>
<div style="position:absolute;left:1268px;top:529px;width:14px;height:1.2px;background:#c4c4c4"></div>
<svg style="left:1268px;top:520px" width="16" height="20"><path d="M4 8.2 H10 L7 5 Z M4 11.8 H10 L7 15 Z" fill="#000"/></svg>
<div style="position:absolute;left:1225px;top:548px;width:59px;height:20px;background:#fff;border:1px solid #a8a8a8;box-sizing:border-box"></div>
<div style="position:absolute;left:1268px;top:550px;width:14px;height:16px;background:#f0f0f0;border:1px solid #d4d4d4;box-sizing:border-box"></div>
<div style="position:absolute;left:1268px;top:557px;width:14px;height:1.2px;background:#c4c4c4"></div>
<svg style="left:1268px;top:548px" width="16" height="20"><path d="M4 8.2 H10 L7 5 Z M4 11.8 H10 L7 15 Z" fill="#000"/></svg>
<div class="t" style="left:1227px;top:523.27px;font-size:11.5px;line-height:11.5px;color:#000;font-weight:normal;font-family:'Liberation Sans', sans-serif;">0</div>
<div style="position:absolute;left:1110px;top:546px;width:132px;height:19px;background:#fff"></div>
<div class="t" style="left:1241px;top:551.88px;font-size:9px;line-height:9px;color:#000;font-weight:normal;font-family:'Liberation Sans', sans-serif;font-style:italic">7</div>
<div class="t" style="left:1117px;top:522.30px;font-size:15px;line-height:15px;color:#000;font-weight:normal;font-family:'Liberation Sans', sans-serif;">Первый слой:</div>
<div class="t" style="left:1117px;top:550.30px;font-size:15px;line-height:15px;color:#000;font-weight:normal;font-family:'Liberation Sans', sans-serif;">Последний слой:</div>
<div style="position:absolute;left:1296px;top:528px;width:210px;height:8px;background:linear-gradient(to bottom,#d6d6d6,#5e5e5e 50%,#d6d6d6)"></div>
<div style="position:absolute;left:1295px;top:553px;width:112px;height:9px;background:linear-gradient(to bottom,#dcdcdc,#a4a4a4 50%,#dcdcdc)"></div>
<div style="position:absolute;left:1407px;top:553px;width:99px;height:9px;background:linear-gradient(to bottom,#d6d6d6,#5e5e5e 50%,#d6d6d6)"></div>
<div style="position:absolute;left:1294px;top:521px;width:15px;height:20px;background:linear-gradient(to bottom,#fdfdfd,#e2e2e2 50%,#f4f4f4);border:1px solid #a8a8a8;border-radius:4px;box-sizing:border-box"></div>
<div style="position:absolute;left:1404px;top:548px;width:15px;height:20px;background:linear-gradient(to bottom,#fdfdfd,#e2e2e2 50%,#f4f4f4);border:1px solid #a8a8a8;border-radius:4px;box-sizing:border-box"></div>
<div style="position:absolute;left:1px;top:680px;width:1535px;height:1px;background:#6d6d6d"></div>
<div style="position:absolute;left:1px;top:681px;width:1535px;height:4px;background:#ffffff"></div>
<div style="position:absolute;left:1px;top:685px;width:1535px;height:1px;background:#6d6d6d"></div>
<div style="position:absolute;left:1px;top:686px;width:1533px;height:220px;background:#f0f0f0"></div>
<div class="t" style="left:8px;top:692.69px;font-size:11px;line-height:11px;color:#000;font-weight:normal;font-family:'Liberation Sans', sans-serif;">Показывать в журнале:</div>
<svg style="left:0;top:686px" width="1536" height="24" viewBox="0 686 1536 24"><defs><radialGradient id="orbL" cx="0.45" cy="0.4" r="0.6"><stop offset="0" stop-color="#d8ffff"/><stop offset="0.6" stop-color="#8ee0f8"/><stop offset="1" stop-color="#5a8ad0"/></radialGradient><radialGradient id="orbD" cx="0.45" cy="0.4" r="0.6"><stop offset="0" stop-color="#7a90e0"/><stop offset="0.6" stop-color="#3a50a8"/><stop offset="1" stop-color="#1a2460"/></radialGradient></defs><circle cx="150" cy="699" r="5.4" fill="url(#orbL)" stroke="#2a2a3a" stroke-width="1.3"/><circle cx="232" cy="699" r="5.4" fill="url(#orbD)" stroke="#0a0a0a" stroke-width="1.3"/><circle cx="295" cy="699" r="5.4" fill="url(#orbD)" stroke="#0a0a0a" stroke-width="1.3"/><circle cx="417" cy="699" r="5.4" fill="url(#orbL)" stroke="#2a2a3a" stroke-width="1.3"/><circle cx="492" cy="699" r="5.4" fill="url(#orbD)" stroke="#0a0a0a" stroke-width="1.3"/><circle cx="608" cy="699" r="5.4" fill="url(#orbD)" stroke="#0a0a0a" stroke-width="1.3"/><path d="M716.5 694.5 H725.5 M719 694.5 V693 H723 V694.5 M717.5 696 H724.5 L723.8 705 H718.2 Z" fill="none" stroke="#777" stroke-width="1"/><path d="M719.8 697.5 V703.5 M721 697.5 V703.5 M722.2 697.5 V703.5" stroke="#777" stroke-width="0.7"/><path d="M840.5 693.5 H846 L848 695.5 V702.5 H840.5 Z" fill="#f4f4f4" stroke="#777" stroke-width="1"/><path d="M844.5 696.5 H850 L852.5 699 V706.5 H844.5 Z" fill="#f4f4f4" stroke="#777" stroke-width="1"/></svg>
<div class="t" style="left:158px;top:692.69px;font-size:11px;line-height:11px;color:#000;font-weight:normal;font-family:'Liberation Sans', sans-serif;">Команды</div>
<div class="t" style="left:240px;top:692.69px;font-size:11px;line-height:11px;color:#000;font-weight:normal;font-family:'Liberation Sans', sans-serif;">Инфо</div>
<div class="t" style="left:303px;top:692.69px;font-size:11px;line-height:11px;color:#000;font-weight:normal;font-family:'Liberation Sans', sans-serif;">Предупреждения</div>
<div class="t" style="left:424px;top:692.69px;font-size:11px;line-height:11px;color:#000;font-weight:normal;font-family:'Liberation Sans', sans-serif;">Ошибки</div>
<div class="t" style="left:501px;top:692.69px;font-size:11px;line-height:11px;color:#000;font-weight:normal;font-family:'Liberation Sans', sans-serif;">Подтверждение</div>
<div class="t" style="left:616px;top:692.69px;font-size:11px;line-height:11px;color:#000;font-weight:normal;font-family:'Liberation Sans', sans-serif;">Автопрокрутка</div>
<div class="t" style="left:730px;top:692.69px;font-size:11px;line-height:11px;color:#000;font-weight:normal;font-family:'Liberation Sans', sans-serif;">Очистить журнал</div>
<div class="t" style="left:857px;top:692.69px;font-size:11px;line-height:11px;color:#000;font-weight:normal;font-family:'Liberation Sans', sans-serif;">Копировать</div>
<div style="position:absolute;left:2px;top:711px;width:1516px;height:193px;background:#fff"></div>
<div style="position:absolute;left:2px;top:711px;width:102px;height:193px;background:#5f9ea0"></div>
<div class="t" style="left:8px;top:713.55px;font-size:12.33px;line-height:12.33px;color:#f8f8f8;font-weight:normal;font-family:'Liberation Mono', monospace;">18:36:47.562</div>
<div class="t" style="left:110px;top:713.55px;font-size:12.33px;line-height:12.33px;color:#000080;font-weight:normal;font-family:'Liberation Mono', monospace;">&lt;Slic3r&gt; =&gt; Processing triangulated mesh</div>
<div style="position:absolute;left:104px;top:727px;width:1413px;height:16px;background:#faf0e6"></div>
<div class="t" style="left:8px;top:729.55px;font-size:12.33px;line-height:12.33px;color:#f8f8f8;font-weight:normal;font-family:'Liberation Mono', monospace;">18:36:47.593</div>
<div class="t" style="left:110px;top:729.55px;font-size:12.33px;line-height:12.33px;color:#000080;font-weight:normal;font-family:'Liberation Mono', monospace;">&lt;Slic3r&gt; =&gt; Generating perimeters</div>
<div class="t" style="left:8px;top:745.55px;font-size:12.33px;line-height:12.33px;color:#f8f8f8;font-weight:normal;font-family:'Liberation Mono', monospace;">18:36:47.938</div>
<div class="t" style="left:110px;top:745.55px;font-size:12.33px;line-height:12.33px;color:#000080;font-weight:normal;font-family:'Liberation Mono', monospace;">&lt;Slic3r&gt; =&gt; Preparing infill</div>
<div style="position:absolute;left:104px;top:759px;width:1413px;height:16px;background:#faf0e6"></div>
<div class="t" style="left:8px;top:761.55px;font-size:12.33px;line-height:12.33px;color:#f8f8f8;font-weight:normal;font-family:'Liberation Mono', monospace;">18:36:48.012</div>
<div class="t" style="left:110px;top:761.55px;font-size:12.33px;line-height:12.33px;color:#000080;font-weight:normal;font-family:'Liberation Mono', monospace;">&lt;Slic3r&gt; =&gt; Infilling layers</div>
<div class="t" style="left:8px;top:777.55px;font-size:12.33px;line-height:12.33px;color:#f8f8f8;font-weight:normal;font-family:'Liberation Mono', monospace;">18:36:48.206</div>
<div class="t" style="left:110px;top:777.55px;font-size:12.33px;line-height:12.33px;color:#000080;font-weight:normal;font-family:'Liberation Mono', monospace;">&lt;Slic3r&gt; =&gt; Generating skirt</div>
<div style="position:absolute;left:104px;top:791px;width:1413px;height:16px;background:#faf0e6"></div>
<div class="t" style="left:8px;top:793.55px;font-size:12.33px;line-height:12.33px;color:#f8f8f8;font-weight:normal;font-family:'Liberation Mono', monospace;">18:36:48.208</div>
<div class="t" style="left:110px;top:793.55px;font-size:12.33px;line-height:12.33px;color:#000080;font-weight:normal;font-family:'Liberation Mono', monospace;">&lt;Slic3r&gt; =&gt; Generating brim</div>
<div class="t" style="left:8px;top:809.55px;font-size:12.33px;line-height:12.33px;color:#f8f8f8;font-weight:normal;font-family:'Liberation Mono', monospace;">18:36:48.209</div>
<div class="t" style="left:110px;top:809.55px;font-size:12.33px;line-height:12.33px;color:#000080;font-weight:normal;font-family:'Liberation Mono', monospace;">&lt;Slic3r&gt; =&gt; Exporting G-code to composition.gcode</div>
<div style="position:absolute;left:104px;top:823px;width:1413px;height:16px;background:#faf0e6"></div>
<div class="t" style="left:8px;top:825.55px;font-size:12.33px;line-height:12.33px;color:#f8f8f8;font-weight:normal;font-family:'Liberation Mono', monospace;">18:36:49.469</div>
<div class="t" style="left:110px;top:825.55px;font-size:12.33px;line-height:12.33px;color:#000080;font-weight:normal;font-family:'Liberation Mono', monospace;">&lt;Slic3r&gt; Done. Process took 0 minutes and 1.908 seconds</div>
<div class="t" style="left:8px;top:841.55px;font-size:12.33px;line-height:12.33px;color:#f8f8f8;font-weight:normal;font-family:'Liberation Mono', monospace;">18:36:49.470</div>
<div class="t" style="left:110px;top:841.55px;font-size:12.33px;line-height:12.33px;color:#000080;font-weight:normal;font-family:'Liberation Mono', monospace;">&lt;Slic3r&gt; Filament required: 18639.3mm (44.8cm3)</div>
<div style="position:absolute;left:104px;top:855px;width:1413px;height:16px;background:#faf0e6"></div>
<div class="t" style="left:8px;top:857.55px;font-size:12.33px;line-height:12.33px;color:#f8f8f8;font-weight:normal;font-family:'Liberation Mono', monospace;">18:53:41.737</div>
<div class="t" style="left:110px;top:857.55px;font-size:12.33px;line-height:12.33px;color:#000080;font-weight:normal;font-family:'Liberation Mono', monospace;">&lt;Slic3r&gt; =&gt; Processing triangulated mesh</div>
<div class="t" style="left:8px;top:873.55px;font-size:12.33px;line-height:12.33px;color:#f8f8f8;font-weight:normal;font-family:'Liberation Mono', monospace;">18:53:41.769</div>
<div class="t" style="left:110px;top:873.55px;font-size:12.33px;line-height:12.33px;color:#000080;font-weight:normal;font-family:'Liberation Mono', monospace;">&lt;Slic3r&gt; =&gt; Generating perimeters</div>
<div style="position:absolute;left:104px;top:887px;width:1413px;height:16px;background:#faf0e6"></div>
<div class="t" style="left:8px;top:889.55px;font-size:12.33px;line-height:12.33px;color:#f8f8f8;font-weight:normal;font-family:'Liberation Mono', monospace;">18:53:42.096</div>
<div class="t" style="left:110px;top:889.55px;font-size:12.33px;line-height:12.33px;color:#000080;font-weight:normal;font-family:'Liberation Mono', monospace;">&lt;Slic3r&gt; =&gt; Preparing infill</div>
<div style="position:absolute;left:1518px;top:711px;width:16px;height:193px;background:#f0f0f0"></div>
<div style="position:absolute;left:1519px;top:728px;width:14px;height:137px;background:#cdcdcd"></div>
<svg style="left:1518px;top:711px" width="16" height="193" viewBox="1518 711 16 193"><path d="M1522 722.5 L1525.5 719 L1529 722.5" fill="none" stroke="#444" stroke-width="1.6"/><path d="M1522 895 L1525.5 898.5 L1529 895" fill="none" stroke="#444" stroke-width="1.6"/></svg>
<div style="position:absolute;left:1px;top:904px;width:1534px;height:1px;background:#6d6d6d"></div>
<div style="position:absolute;left:1px;top:905px;width:1534px;height:23px;background:#f0f0f0"></div>
<div class="t" style="left:5px;top:911.84px;font-size:12px;line-height:12px;color:#000;font-weight:normal;font-family:'Liberation Sans', sans-serif;">Отключен: default</div>
<div class="t" style="left:681px;top:910.84px;font-size:12px;line-height:12px;color:#000;font-weight:normal;font-family:'Liberation Sans', sans-serif;">-</div>
<div class="t" style="left:1269px;top:911.84px;font-size:12px;line-height:12px;color:#000;font-weight:normal;font-family:'Liberation Sans', sans-serif;">Готов</div>
<div style="position:absolute;left:1305px;top:909px;width:214px;height:16px;background:#e6e6e6;border:1px solid #bcbcbc;box-sizing:border-box"></div>
<svg style="left:1520px;top:910px" width="16" height="16"><rect x="12" y="5" width="2" height="2" fill="#999"/><rect x="8" y="9" width="2" height="2" fill="#999"/><rect x="12" y="9" width="2" height="2" fill="#999"/><rect x="4" y="13" width="2" height="2" fill="#999"/><rect x="8" y="13" width="2" height="2" fill="#999"/><rect x="12" y="13" width="2" height="2" fill="#999"/></svg>
<div style="position:absolute;left:0px;top:0px;width:1536px;height:1px;background:#888"></div>
<div style="position:absolute;left:0px;top:0px;width:1px;height:929px;background:#888"></div>
<div style="position:absolute;left:1535px;top:0px;width:1px;height:929px;background:#7a7a7a"></div>
<div style="position:absolute;left:1534px;top:109px;width:1px;height:819px;background:#8c8c8c"></div>
<div style="position:absolute;left:0px;top:928px;width:1536px;height:1px;background:#888"></div>
<div style="position:absolute;left:1534px;top:686px;width:1px;height:220px;background:#6d6d6d"></div>
<svg style="left:2px;top:132px" width="40" height="360" viewBox="2 132 40 360">
<rect x="6.5" y="133.5" width="34" height="35" fill="#f6f6f6" stroke="#3d9bf5" stroke-width="1"/>
<path d="M31.8 144.5 A10 10 0 1 0 33.2 155.5" fill="none" stroke="#6b6b6b" stroke-width="3.6"/>
<path d="M35.5 138.5 L35.5 149 L25.5 147 Z" fill="#6b6b6b"/>
<rect x="14.899999999999999" y="188.4" width="17.200000000000003" height="3.2" fill="#6b6b6b"/><rect x="21.9" y="181.39999999999998" width="3.2" height="17.200000000000003" fill="#6b6b6b"/><path d="M8.7 190 L14.899999999999999 185.2 V194.8 Z M38.3 190 L32.099999999999994 185.2 V194.8 Z M23.5 175.2 L18.7 181.39999999999998 H28.3 Z M23.5 204.8 L18.7 198.60000000000002 H28.3 Z" fill="#6b6b6b" stroke="#6b6b6b" stroke-width="1" stroke-linejoin="round"/>
<rect x="14.899999999999999" y="228.4" width="17.200000000000003" height="3.2" fill="#b9b9b9"/><rect x="21.9" y="221.39999999999998" width="3.2" height="17.200000000000003" fill="#b9b9b9"/><path d="M8.7 230 L14.899999999999999 225.2 V234.8 Z M38.3 230 L32.099999999999994 225.2 V234.8 Z M23.5 215.2 L18.7 221.39999999999998 H28.3 Z M23.5 244.8 L18.7 238.60000000000002 H28.3 Z" fill="#b9b9b9" stroke="#b9b9b9" stroke-width="1" stroke-linejoin="round"/>
<path d="M9.5 217 H16.5 V223 H9.5 Z M16.5 219 H19 L20.5 221 V223 H16.5 Z" fill="#b9b9b9" stroke="#f4f4f4" stroke-width="0.6"/>
<circle cx="12" cy="224" r="1.6" fill="#b9b9b9" stroke="#f4f4f4" stroke-width="0.6"/><circle cx="18" cy="224" r="1.6" fill="#b9b9b9" stroke="#f4f4f4" stroke-width="0.6"/>
<circle cx="21.5" cy="265.7" r="9.9" fill="none" stroke="#6b6b6b" stroke-width="3.4"/>
<path d="M29.5 273.5 L36.5 280.5" stroke="#6b6b6b" stroke-width="3.6" stroke-linecap="round"/>
<path d="M16 265.7 H27 M21.5 260.2 V271.2" stroke="#6b6b6b" stroke-width="1.6"/>
<circle cx="21.5" cy="304.5" r="11.5" fill="none" stroke="#6b6b6b" stroke-width="4"/>
<path d="M30.5 313.5 L36.5 319.5" stroke="#6b6b6b" stroke-width="4" stroke-linecap="round"/>
<path d="M16 301 V299 H18 M25 299 H27 V301 M27 308 V310 H25 M18 310 H16 V308" stroke="#111" stroke-width="1.2" fill="none"/>
<rect x="9.5" y="332.9" width="28.3" height="26.3" fill="#fff" stroke="none"/><path d="M9.5 339.2 H31.5 L9.5 359.2 Z" fill="#6aaabf"/><path d="M9.5 339.2 L15.8 332.9 L31.5 339.2 Z" fill="#6aaabf"/><path d="M15.8 332.9 V352.9 H37.8 M9.5 359.2 L15.8 352.9" stroke="#555" stroke-width="0.9" fill="none" opacity="0.7"/><path d="M9.5 339.2 H31.5 V359.2 H9.5 Z M9.5 339.2 L15.8 332.9 H37.8 L31.5 339.2 M37.8 332.9 V352.9 L31.5 359.2" stroke="#1a1a1a" stroke-width="1.7" fill="none" stroke-linejoin="round"/>
<rect x="9.5" y="372.09999999999997" width="28.3" height="26.3" fill="#fff" stroke="none"/><rect x="9.5" y="378.4" width="22" height="20" fill="#6aaabf"/><path d="M15.8 372.09999999999997 V392.09999999999997 H37.8 M9.5 398.4 L15.8 392.09999999999997" stroke="#555" stroke-width="0.9" fill="none" opacity="0.7"/><path d="M9.5 378.4 H31.5 V398.4 H9.5 Z M9.5 378.4 L15.8 372.09999999999997 H37.8 L31.5 378.4 M37.8 372.09999999999997 V392.09999999999997 L31.5 398.4" stroke="#1a1a1a" stroke-width="1.7" fill="none" stroke-linejoin="round"/>
<rect x="9.5" y="411.2" width="28.3" height="26.3" fill="#fff" stroke="none"/><path d="M9.5 417.5 L15.8 411.2 H37.8 L31.5 417.5 Z" fill="#6aaabf"/><path d="M15.8 411.2 V431.2 H37.8 M9.5 437.5 L15.8 431.2" stroke="#555" stroke-width="0.9" fill="none" opacity="0.7"/><path d="M9.5 417.5 H31.5 V437.5 H9.5 Z M9.5 417.5 L15.8 411.2 H37.8 L31.5 417.5 M37.8 411.2 V431.2 L31.5 437.5" stroke="#1a1a1a" stroke-width="1.7" fill="none" stroke-linejoin="round"/>
<line x1="8" y1="447.5" x2="39" y2="447.5" stroke="#a8a8a8" stroke-width="1"/>
<path d="M12 477 L29 457.5 M18.5 482 L35.5 462.5" stroke="#6b6b6b" stroke-width="1.7" stroke-linecap="round"/>
</svg>
</body></html>
